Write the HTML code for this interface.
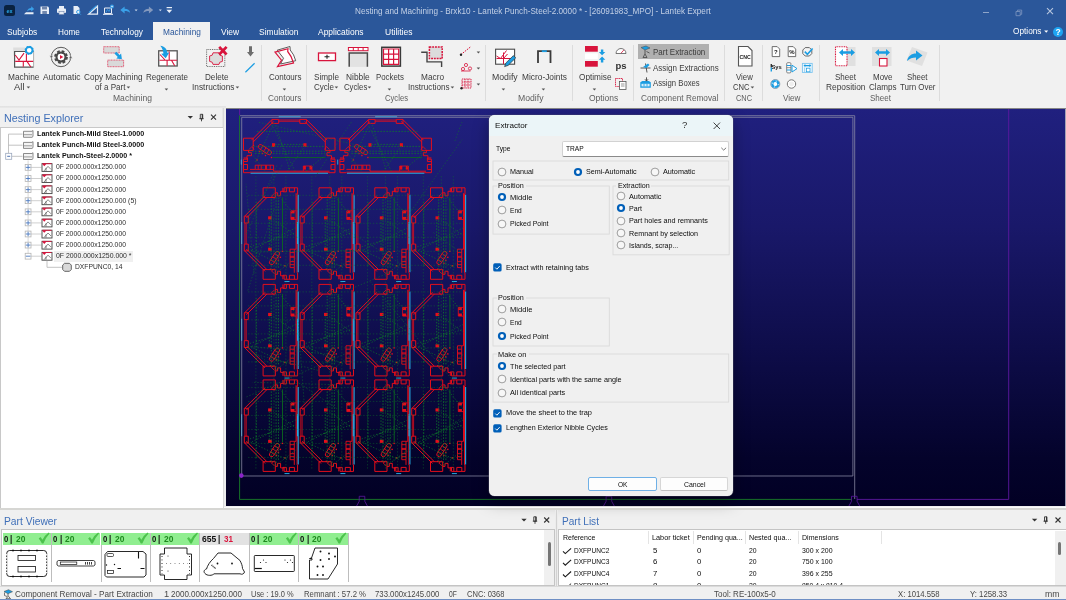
<!DOCTYPE html>
<html lang="en"><head><meta charset="utf-8"><title>Nesting and Machining - Lantek Expert</title>
<style>
html,body{margin:0;padding:0;}
body{width:1066px;height:600px;overflow:hidden;position:relative;background:#f0f0f0;font-family:"Liberation Sans",sans-serif;}
.t{position:absolute;white-space:nowrap;transform-origin:left center;display:block;}
.b{position:absolute;box-sizing:border-box;display:block;}
</style></head>
<body>
<div class="b" style="left:0.00px;top:0.00px;width:1066.00px;height:40.00px;background:#2b579a;"></div>
<svg class="b" style="left:4.00px;top:5.00px;transform:perspective(1000px) translateZ(0);" width="11" height="11" viewBox="0 0 11 11"><rect x="0" y="0" width="11" height="11" rx="2.5" fill="#0a2240"/><text x="5.5" y="7.6" font-size="5.5" font-weight="bold" text-anchor="middle" fill="#27a7e8" font-family="Liberation Sans, sans-serif">ex</text></svg>
<svg class="b" style="left:0.00px;top:0.00px;transform:perspective(1000px) translateZ(0);" width="180" height="22" viewBox="0 0 180 22"><path d="M24 14.2h9.5v-2h-7.5z" fill="#e8eef7"/><path d="M27 11.5c0.5-2.5 2.3-3.6 4.2-3.6v-1.6l3 2.6-3 2.6v-1.6c-1.6 0-3 .4-4.2 1.6z" fill="#3aa0e8"/><path d="M40.5 6.5h7.5l1 1v6.5h-8.5z" fill="#e8eef7"/><rect x="42" y="6.5" width="5" height="3" fill="#6f86ad"/><rect x="42.3" y="11" width="4.6" height="3" fill="#6f86ad"/><rect x="57" y="8.5" width="9" height="4.5" rx="1" fill="#e8eef7"/><rect x="59" y="6" width="5" height="3" fill="#e8eef7"/><rect x="59" y="11.5" width="5" height="3" fill="#e8eef7" stroke="#6f86ad" stroke-width=".6"/><path d="M73.5 6h4l2 2v6h-6z" fill="#e8eef7"/><circle cx="78.3" cy="12" r="1.7" fill="#e8eef7" stroke="#3aa0e8" stroke-width="1"/><path d="M79.5 13.3l1.3 1.3" stroke="#3aa0e8" stroke-width="1"/><path d="M88.5 14.2l9-8v8z" fill="none" stroke="#e8eef7" stroke-width="1.2"/><path d="M89 12.5l7.5-6.8" stroke="#3aa0e8" stroke-width="1.1"/><path d="M104.5 8h7v5.5h-7z" fill="none" stroke="#e8eef7" stroke-width="1"/><path d="M103 14.3h10" stroke="#e8eef7" stroke-width="1.1"/><path d="M106 12.5l1.5-3 1.5 2 1.5-3" stroke="#3aa0e8" stroke-width=".8" fill="none"/><circle cx="112" cy="6.5" r="1.9" fill="#3aa0e8"/><circle cx="112" cy="6.5" r=".8" fill="#e8eef7"/><path d="M120.3 10l4.3-3.4v2.2c3 0 5.2 1.3 5.6 4.3-1.4-1.6-3.2-2-5.6-2v2.3z" fill="#3aa0e8"/><path d="M134.6 9.6h3l-1.5 1.7z" fill="#c9d6ea"/><path d="M153.2 10l-4.3-3.4v2.2c-3 0-5.2 1.3-5.6 4.3 1.4-1.6 3.2-2 5.6-2v2.3z" fill="#8398bd"/><path d="M158.8 9.6h3l-1.5 1.7z" fill="#c9d6ea"/><path d="M166.6 7.6h5.4" stroke="#e8eef7" stroke-width="1.2"/><path d="M166.4 9.8h5.8l-2.9 3.2z" fill="#e8eef7"/></svg>
<span class="t" style="left:355.00px;top:4.76px;font-size:9.3px;line-height:12.09px;color:#c3d0e6;transform:perspective(1000px) translateZ(0) scaleX(0.8772);">Nesting and Machining - Brxk10 - Lantek Punch-Steel-2.0000 * - [26091983_MPO] - Lantek Expert</span>
<svg class="b" style="left:0.00px;top:0.00px;transform:perspective(1000px) translateZ(0);" width="1066" height="22" viewBox="0 0 1066 22"><path d="M983 12.5h6" stroke="#8fa5c9" stroke-width="1"/><path d="M1016 11.5h4.2v4.2h-4.2z M1017.5 11.5v-1.4h4.2v4.2h-1.5" fill="none" stroke="#7f97c0" stroke-width=".8"/><path d="M1047 8.2l6 6M1053 8.2l-6 6" stroke="#b7c6df" stroke-width="1.1"/></svg>
<div class="b" style="left:153.00px;top:22.00px;width:57.00px;height:18.50px;background:#f1f1f1;"></div>
<span class="t" style="left:6.70px;top:25.69px;font-size:9.4px;line-height:12.22px;color:#ffffff;transform:perspective(1000px) translateZ(0) scaleX(0.8919);">Subjobs</span>
<span class="t" style="left:58.00px;top:25.69px;font-size:9.4px;line-height:12.22px;color:#ffffff;transform:perspective(1000px) translateZ(0) scaleX(0.8774);">Home</span>
<span class="t" style="left:100.50px;top:25.69px;font-size:9.4px;line-height:12.22px;color:#ffffff;transform:perspective(1000px) translateZ(0) scaleX(0.8832);">Technology</span>
<span class="t" style="left:162.50px;top:25.69px;font-size:9.4px;line-height:12.22px;color:#2b579a;transform:perspective(1000px) translateZ(0) scaleX(0.8869);">Machining</span>
<span class="t" style="left:221.00px;top:25.69px;font-size:9.4px;line-height:12.22px;color:#ffffff;transform:perspective(1000px) translateZ(0) scaleX(0.9007);">View</span>
<span class="t" style="left:258.70px;top:25.69px;font-size:9.4px;line-height:12.22px;color:#ffffff;transform:perspective(1000px) translateZ(0) scaleX(0.9000);">Simulation</span>
<span class="t" style="left:318.30px;top:25.69px;font-size:9.4px;line-height:12.22px;color:#ffffff;transform:perspective(1000px) translateZ(0) scaleX(0.9016);">Applications</span>
<span class="t" style="left:384.50px;top:25.69px;font-size:9.4px;line-height:12.22px;color:#ffffff;transform:perspective(1000px) translateZ(0) scaleX(0.9078);">Utilities</span>
<span class="t" style="left:1013.00px;top:25.09px;font-size:9.4px;line-height:12.22px;color:#ffffff;transform:perspective(1000px) translateZ(0) scaleX(0.8798);">Options</span>
<svg class="b" style="left:1043.00px;top:29.00px;transform:perspective(1000px) translateZ(0);" width="8" height="6" viewBox="0 0 8 6"><path d="M1.2 1.6h4l-2 2.2z" fill="#fff"/></svg>
<svg class="b" style="left:1052.00px;top:25.50px;transform:perspective(1000px) translateZ(0);" width="12" height="12" viewBox="0 0 12 12"><circle cx="6" cy="6" r="5" fill="#1ea4f2"/><text x="6" y="9" font-size="8.5" font-weight="bold" text-anchor="middle" fill="#fff" font-family="Liberation Sans, sans-serif">?</text></svg>
<div class="b" style="left:0.00px;top:40.00px;width:1066.00px;height:66.50px;background:#f1f1f1;"></div>
<div class="b" style="left:0.00px;top:106.00px;width:226.00px;height:2.40px;background:linear-gradient(#e0e0e0,#e9e9e9);"></div>
<div class="b" style="left:226.00px;top:106.50px;width:840.00px;height:1.90px;background:#f1f1f1;"></div>
<span class="t" style="left:7.50px;top:71.16px;font-size:9.3px;line-height:12.09px;color:#3c3c3c;transform:perspective(1000px) translateZ(0) scaleX(0.8961);">Machine</span>
<span class="t" style="left:14.00px;top:80.86px;font-size:9.3px;line-height:12.09px;color:#3c3c3c;transform:perspective(1000px) translateZ(0) scaleX(1.0159);">All</span>
<svg class="b" style="left:25.50px;top:85.50px;transform:perspective(1000px) translateZ(0);" width="5" height="4" viewBox="0 0 5 4"><path d="M0.6 0.6h3.6l-1.8 2z" fill="#555"/></svg>
<span class="t" style="left:42.50px;top:71.16px;font-size:9.3px;line-height:12.09px;color:#3c3c3c;transform:perspective(1000px) translateZ(0) scaleX(0.9069);">Automatic</span>
<span class="t" style="left:84.00px;top:71.16px;font-size:9.3px;line-height:12.09px;color:#3c3c3c;transform:perspective(1000px) translateZ(0) scaleX(0.8772);">Copy Machining</span>
<span class="t" style="left:94.50px;top:80.86px;font-size:9.3px;line-height:12.09px;color:#3c3c3c;transform:perspective(1000px) translateZ(0) scaleX(0.8676);">of a Part</span>
<svg class="b" style="left:126.00px;top:85.50px;transform:perspective(1000px) translateZ(0);" width="5" height="4" viewBox="0 0 5 4"><path d="M0.6 0.6h3.6l-1.8 2z" fill="#555"/></svg>
<span class="t" style="left:146.00px;top:71.16px;font-size:9.3px;line-height:12.09px;color:#3c3c3c;transform:perspective(1000px) translateZ(0) scaleX(0.8641);">Regenerate</span>
<svg class="b" style="left:164.00px;top:88.00px;transform:perspective(1000px) translateZ(0);" width="5" height="4" viewBox="0 0 5 4"><path d="M0.6 0.6h3.6l-1.8 2z" fill="#555"/></svg>
<span class="t" style="left:204.50px;top:71.16px;font-size:9.3px;line-height:12.09px;color:#3c3c3c;transform:perspective(1000px) translateZ(0) scaleX(0.8741);">Delete</span>
<span class="t" style="left:192.00px;top:80.86px;font-size:9.3px;line-height:12.09px;color:#3c3c3c;transform:perspective(1000px) translateZ(0) scaleX(0.8937);">Instructions</span>
<svg class="b" style="left:234.50px;top:85.50px;transform:perspective(1000px) translateZ(0);" width="5" height="4" viewBox="0 0 5 4"><path d="M0.6 0.6h3.6l-1.8 2z" fill="#555"/></svg>
<span class="t" style="left:113.00px;top:91.86px;font-size:9.3px;line-height:12.09px;color:#5e5e5e;transform:perspective(1000px) translateZ(0) scaleX(0.9200);">Machining</span>
<div class="b" style="left:261.00px;top:45.00px;width:1.00px;height:56.00px;background:#dcdcdc;"></div>
<span class="t" style="left:269.00px;top:71.16px;font-size:9.3px;line-height:12.09px;color:#3c3c3c;transform:perspective(1000px) translateZ(0) scaleX(0.8612);">Contours</span>
<svg class="b" style="left:282.00px;top:88.00px;transform:perspective(1000px) translateZ(0);" width="5" height="4" viewBox="0 0 5 4"><path d="M0.6 0.6h3.6l-1.8 2z" fill="#555"/></svg>
<span class="t" style="left:268.30px;top:91.86px;font-size:9.3px;line-height:12.09px;color:#5e5e5e;transform:perspective(1000px) translateZ(0) scaleX(0.8877);">Contours</span>
<div class="b" style="left:306.00px;top:45.00px;width:1.00px;height:56.00px;background:#dcdcdc;"></div>
<span class="t" style="left:314.00px;top:71.16px;font-size:9.3px;line-height:12.09px;color:#3c3c3c;transform:perspective(1000px) translateZ(0) scaleX(0.8794);">Simple</span>
<span class="t" style="left:314.00px;top:80.86px;font-size:9.3px;line-height:12.09px;color:#3c3c3c;transform:perspective(1000px) translateZ(0) scaleX(0.8600);">Cycle</span>
<svg class="b" style="left:333.50px;top:85.50px;transform:perspective(1000px) translateZ(0);" width="5" height="4" viewBox="0 0 5 4"><path d="M0.6 0.6h3.6l-1.8 2z" fill="#555"/></svg>
<span class="t" style="left:346.00px;top:71.16px;font-size:9.3px;line-height:12.09px;color:#3c3c3c;transform:perspective(1000px) translateZ(0) scaleX(0.8989);">Nibble</span>
<span class="t" style="left:343.60px;top:80.86px;font-size:9.3px;line-height:12.09px;color:#3c3c3c;transform:perspective(1000px) translateZ(0) scaleX(0.8350);">Cycles</span>
<svg class="b" style="left:367.00px;top:85.50px;transform:perspective(1000px) translateZ(0);" width="5" height="4" viewBox="0 0 5 4"><path d="M0.6 0.6h3.6l-1.8 2z" fill="#555"/></svg>
<span class="t" style="left:376.30px;top:71.16px;font-size:9.3px;line-height:12.09px;color:#3c3c3c;transform:perspective(1000px) translateZ(0) scaleX(0.8464);">Pockets</span>
<svg class="b" style="left:387.20px;top:88.00px;transform:perspective(1000px) translateZ(0);" width="5" height="4" viewBox="0 0 5 4"><path d="M0.6 0.6h3.6l-1.8 2z" fill="#555"/></svg>
<span class="t" style="left:420.80px;top:71.16px;font-size:9.3px;line-height:12.09px;color:#3c3c3c;transform:perspective(1000px) translateZ(0) scaleX(0.8901);">Macro</span>
<span class="t" style="left:407.80px;top:80.86px;font-size:9.3px;line-height:12.09px;color:#3c3c3c;transform:perspective(1000px) translateZ(0) scaleX(0.8748);">Instructions</span>
<svg class="b" style="left:450.00px;top:85.50px;transform:perspective(1000px) translateZ(0);" width="5" height="4" viewBox="0 0 5 4"><path d="M0.6 0.6h3.6l-1.8 2z" fill="#555"/></svg>
<svg class="b" style="left:475.50px;top:50.50px;transform:perspective(1000px) translateZ(0);" width="5" height="4" viewBox="0 0 5 4"><path d="M0.6 0.6h3.6l-1.8 2z" fill="#555"/></svg>
<svg class="b" style="left:475.50px;top:66.50px;transform:perspective(1000px) translateZ(0);" width="5" height="4" viewBox="0 0 5 4"><path d="M0.6 0.6h3.6l-1.8 2z" fill="#555"/></svg>
<svg class="b" style="left:475.50px;top:82.50px;transform:perspective(1000px) translateZ(0);" width="5" height="4" viewBox="0 0 5 4"><path d="M0.6 0.6h3.6l-1.8 2z" fill="#555"/></svg>
<span class="t" style="left:385.30px;top:91.86px;font-size:9.3px;line-height:12.09px;color:#5e5e5e;transform:perspective(1000px) translateZ(0) scaleX(0.8242);">Cycles</span>
<div class="b" style="left:485.00px;top:45.00px;width:1.00px;height:56.00px;background:#dcdcdc;"></div>
<span class="t" style="left:492.00px;top:71.16px;font-size:9.3px;line-height:12.09px;color:#3c3c3c;transform:perspective(1000px) translateZ(0) scaleX(0.9382);">Modify</span>
<svg class="b" style="left:501.00px;top:88.00px;transform:perspective(1000px) translateZ(0);" width="5" height="4" viewBox="0 0 5 4"><path d="M0.6 0.6h3.6l-1.8 2z" fill="#555"/></svg>
<span class="t" style="left:521.50px;top:71.16px;font-size:9.3px;line-height:12.09px;color:#3c3c3c;transform:perspective(1000px) translateZ(0) scaleX(0.8977);">Micro-Joints</span>
<svg class="b" style="left:540.80px;top:88.00px;transform:perspective(1000px) translateZ(0);" width="5" height="4" viewBox="0 0 5 4"><path d="M0.6 0.6h3.6l-1.8 2z" fill="#555"/></svg>
<span class="t" style="left:518.00px;top:91.86px;font-size:9.3px;line-height:12.09px;color:#5e5e5e;transform:perspective(1000px) translateZ(0) scaleX(0.9309);">Modify</span>
<div class="b" style="left:571.50px;top:45.00px;width:1.00px;height:56.00px;background:#dcdcdc;"></div>
<span class="t" style="left:578.50px;top:71.16px;font-size:9.3px;line-height:12.09px;color:#3c3c3c;transform:perspective(1000px) translateZ(0) scaleX(0.8857);">Optimise</span>
<svg class="b" style="left:591.80px;top:88.00px;transform:perspective(1000px) translateZ(0);" width="5" height="4" viewBox="0 0 5 4"><path d="M0.6 0.6h3.6l-1.8 2z" fill="#555"/></svg>
<span class="t" style="left:588.50px;top:91.86px;font-size:9.3px;line-height:12.09px;color:#5e5e5e;transform:perspective(1000px) translateZ(0) scaleX(0.9142);">Options</span>
<div class="b" style="left:633.00px;top:45.00px;width:1.00px;height:56.00px;background:#dcdcdc;"></div>
<div class="b" style="left:638.00px;top:44.00px;width:71.00px;height:15.00px;background:#b0b0b0;"></div>
<span class="t" style="left:653.00px;top:45.85px;font-size:9.3px;line-height:12.09px;color:#3c3c3c;transform:perspective(1000px) translateZ(0) scaleX(0.8575);">Part Extraction</span>
<span class="t" style="left:653.00px;top:61.55px;font-size:9.3px;line-height:12.09px;color:#3c3c3c;transform:perspective(1000px) translateZ(0) scaleX(0.8588);">Assign Extractions</span>
<span class="t" style="left:653.00px;top:77.16px;font-size:9.3px;line-height:12.09px;color:#3c3c3c;transform:perspective(1000px) translateZ(0) scaleX(0.8288);">Assign Boxes</span>
<span class="t" style="left:641.00px;top:91.86px;font-size:9.3px;line-height:12.09px;color:#5e5e5e;transform:perspective(1000px) translateZ(0) scaleX(0.8871);">Component Removal</span>
<div class="b" style="left:724.00px;top:45.00px;width:1.00px;height:56.00px;background:#dcdcdc;"></div>
<span class="t" style="left:736.00px;top:71.16px;font-size:9.3px;line-height:12.09px;color:#3c3c3c;transform:perspective(1000px) translateZ(0) scaleX(0.8404);">View</span>
<span class="t" style="left:733.00px;top:80.86px;font-size:9.3px;line-height:12.09px;color:#3c3c3c;transform:perspective(1000px) translateZ(0) scaleX(0.8189);">CNC</span>
<svg class="b" style="left:750.00px;top:85.50px;transform:perspective(1000px) translateZ(0);" width="5" height="4" viewBox="0 0 5 4"><path d="M0.6 0.6h3.6l-1.8 2z" fill="#555"/></svg>
<span class="t" style="left:736.00px;top:91.86px;font-size:9.3px;line-height:12.09px;color:#5e5e5e;transform:perspective(1000px) translateZ(0) scaleX(0.7941);">CNC</span>
<div class="b" style="left:761.50px;top:45.00px;width:1.00px;height:56.00px;background:#dcdcdc;"></div>
<span class="t" style="left:783.00px;top:91.86px;font-size:9.3px;line-height:12.09px;color:#5e5e5e;transform:perspective(1000px) translateZ(0) scaleX(0.8754);">View</span>
<div class="b" style="left:819.00px;top:45.00px;width:1.00px;height:56.00px;background:#dcdcdc;"></div>
<span class="t" style="left:835.00px;top:71.16px;font-size:9.3px;line-height:12.09px;color:#3c3c3c;transform:perspective(1000px) translateZ(0) scaleX(0.8640);">Sheet</span>
<span class="t" style="left:826.00px;top:80.86px;font-size:9.3px;line-height:12.09px;color:#3c3c3c;transform:perspective(1000px) translateZ(0) scaleX(0.8989);">Reposition</span>
<span class="t" style="left:872.50px;top:71.16px;font-size:9.3px;line-height:12.09px;color:#3c3c3c;transform:perspective(1000px) translateZ(0) scaleX(0.8574);">Move</span>
<span class="t" style="left:869.00px;top:80.86px;font-size:9.3px;line-height:12.09px;color:#3c3c3c;transform:perspective(1000px) translateZ(0) scaleX(0.8723);">Clamps</span>
<span class="t" style="left:907.00px;top:71.16px;font-size:9.3px;line-height:12.09px;color:#3c3c3c;transform:perspective(1000px) translateZ(0) scaleX(0.8435);">Sheet</span>
<span class="t" style="left:900.00px;top:80.86px;font-size:9.3px;line-height:12.09px;color:#3c3c3c;transform:perspective(1000px) translateZ(0) scaleX(0.8551);">Turn Over</span>
<span class="t" style="left:870.00px;top:91.86px;font-size:9.3px;line-height:12.09px;color:#5e5e5e;transform:perspective(1000px) translateZ(0) scaleX(0.8640);">Sheet</span>
<div class="b" style="left:939.00px;top:45.00px;width:1.00px;height:56.00px;background:#dcdcdc;"></div>
<svg class="b" style="left:0.00px;top:0.00px;transform:perspective(1000px) translateZ(0);" width="1066" height="108" viewBox="0 0 1066 108"><rect x="13.2" y="47.5" width="12" height="8" fill="#dedede"/><rect x="14.6" y="51.5" width="19" height="15.6" fill="#fff"/><path d="M33.6 51.5H14.6V67.1H33.6" fill="none" stroke="#555555" stroke-width="1.2"/><path d="M33.6 51.5V67.1" stroke="#9a9a9a" stroke-width=".8"/><path d="M15.2 55l3.8 5 5-6.8M15.2 61.4h18M23.3 61.4v5.400M27 61.4l3.8 5.600M26.4 53.500v7.9" stroke="#d8143c" stroke-width="1.1" fill="none"/><circle cx="29.2" cy="50.3" r="3.3" fill="#fff" stroke="#1b9de2" stroke-width="1.9"/><circle cx="29.2" cy="50.3" r="3.9" fill="none" stroke="#1b9de2" stroke-width="1.3" stroke-dasharray="1.5 1.560"/><circle cx="61" cy="57" r="9.7" fill="none" stroke="#4a4a4a" stroke-width=".9"/><circle cx="61" cy="57" r="5.9" fill="none" stroke="#484848" stroke-width="2" stroke-dasharray="2.7 1.930"/><circle cx="61" cy="57" r="4.4" fill="none" stroke="#484848" stroke-width="2.3"/><circle cx="61" cy="57" r="3.3" fill="#fff"/><path d="M60 55l3.3 2 -3.3 2z" fill="#d8143c"/><path d="M49.6 55.800l1.8 2.6 1.8 -2.600zM72.4 58.200l-1.8 -2.6 -1.8 2.600z" fill="#4a4a4a" stroke="#f1f1f1" stroke-width=".5"/><rect x="103.7" y="46.7" width="15.5" height="6.3" fill="#d9d9d9" stroke="#e0506c" stroke-width=".9" stroke-dasharray="1.1 .5"/><rect x="107.7" y="60.1" width="15.9" height="6.6" fill="#d9d9d9" stroke="#e0506c" stroke-width=".9" stroke-dasharray="1.1 .5"/><path d="M116.3 51.700l3.3 3.4 1.5 -1.5 .8 5.6 -5.6 -.8 1.5 -1.5 -3.4 -3.300z" fill="#1b9de2"/><rect x="158.7" y="50.8" width="18.5" height="15.2" fill="#fff" stroke="#555555" stroke-width="1.3"/><path d="M159.5 60.200h17.500M167.1 60.200v5.600M171.5 60.200l3.2 5.600M169.2 51.500v8.700M160 54.500l5 5.5" stroke="#d8143c" stroke-width="1.1" fill="none"/><path d="M160.3 45.800c4.2 .6 6.8 3.2 7 7l2 -.4 -3.6 5.8 -4.6 -4.5 2.3 -.3c-.1 -2.6 -1.2 -5.2 -3.1 -7.600z" fill="#1b9de2"/><rect x="206.6" y="49.5" width="18.2" height="17" fill="none" stroke="#555" stroke-width=".9" stroke-dasharray=".9 .9"/><path d="M213 52.800h6l.8 2.4 2.6 .8v5.400l-2.6 .8 -.8 2.200h-6l-.8 -2.2 -2.6 -.8v-5.400l2.6 -.8z" fill="#dcdcdc" stroke="#d8143c" stroke-width=".9"/><path d="M219.2 46.900l7.4 7.600M226.6 46.900l-7.4 7.6" stroke="#d8143c" stroke-width="2.7"/><path d="M249 46.300h3v5.800h2l-3.5 4.5 -3.5 -4.500h2z" fill="#6e6e6e"/><path d="M245.4 72.300l9.2 -9" stroke="#1b9de2" stroke-width="1.2"/><path d="M277.2 50.200l12.8 -3.7 .2 3.500q4 4.5 5.5 10.700l-15.2 3.3 3 -5.800z" fill="#fff" stroke="#4a4a4a" stroke-width=".9"/><path d="M275 52.200l13 -3.5 -.3 2.800q4.3 5 5.8 11.500l-16 3.7 4 -6.500z" fill="none" stroke="#d8143c" stroke-width="1.2"/><rect x="318.5" y="53" width="17" height="7.6" fill="#fff" stroke="#d8143c" stroke-width="1.3"/><path d="M324.5 56.800h5M327 54.800v4" stroke="#222" stroke-width="1.1"/><rect x="349.2" y="52.9" width="18.2" height="14" fill="#e2e2e2"/><path d="M349.2 66.800V52.900H367.400V66.8" fill="none" stroke="#4a4a4a" stroke-width="1.5"/><rect x="348.4" y="47.5" width="19.6" height="3.2" fill="#fff" stroke="#d8143c" stroke-width="1"/><path d="M353.3 47.500v3.200M358.2 47.500v3.200M363.1 47.500v3.2" stroke="#d8143c" stroke-width="1"/><rect x="381.8" y="47.3" width="18.6" height="18.8" fill="#fff" stroke="#3a3a3a" stroke-width="1.5"/><path d="M383.5 49h15.200v15.400h-15.200zM388.6 49v15.400M393.6 49v15.400M383.5 54.100h15.200M383.5 59.300h15.2" stroke="#d8143c" stroke-width="1.2" fill="none"/><rect x="429.4" y="47" width="12.8" height="11.6" fill="#dcdcdc" stroke="#d8143c" stroke-width="1.5" stroke-dasharray="1.9 .9"/><path d="M421.2 52.300h5.800v9.600h14.600v5" fill="none" stroke="#444" stroke-width="1.4"/><path d="M461 54.500l10-8" stroke="#d8143c" stroke-width="1" stroke-dasharray="1.5 1"/><circle cx="461" cy="54.8" r="1.2" fill="#222"/><circle cx="463" cy="69" r="1.6" fill="none" stroke="#d8143c" stroke-width=".8"/><circle cx="466" cy="65" r="1.6" fill="none" stroke="#d8143c" stroke-width=".8"/><circle cx="470" cy="68.5" r="1.6" fill="none" stroke="#d8143c" stroke-width=".8"/><path d="M461 71h9.5" stroke="#d8143c" stroke-width=".8"/><path d="M462 79h9v9h-9zM465 79v9M468 79v9M462 82h9M462 85h9" stroke="#d8143c" stroke-width=".9" fill="none" stroke-dasharray="1.2 .6"/><circle cx="461.5" cy="88.2" r="1.2" fill="#222"/><rect x="495.6" y="49.2" width="19" height="15" fill="#fff" stroke="#4a4a4a" stroke-width="1.1"/><path d="M496.5 56l4 2.5 6 -8M496.5 58.500h18M503.5 52.500v11.500M503.5 58.500l4 -4.5" stroke="#d8143c" stroke-width="1" fill="none"/><path d="M504.6 66.600l1.2 -3.6 7.6 -7.4 2.3 2.3 -7.6 7.500z" fill="#1b9de2" stroke="#333" stroke-width=".7"/><path d="M538 63v-11.800h12.500v11.8" fill="none" stroke="#3a3a3a" stroke-width="1.8"/><path d="M541.8 51.200h5" stroke="#1b9de2" stroke-width="1.8"/><rect x="585" y="46" width="12.8" height="5.7" fill="#d8143c"/><rect x="585" y="53.4" width="12.8" height="5.8" fill="#fff"/><rect x="585" y="61" width="12.8" height="5.7" fill="#d8143c"/><path d="M602.1 55.2l-3.2 -3.3h2v-2.4h2.4v2.4h2zM602.1 56.4l3.2 3.3h-2v2.8h-2.4v-2.8h-2z" fill="#1b9de2"/><path d="M616 53.500a5 5 0 0 1 10 0z" fill="#fff" stroke="#555555" stroke-width=".8"/><path d="M621 53.200l3-3.4" stroke="#d8143c" stroke-width=".8"/><text x="621" y="69.3" font-size="9.5" font-weight="bold" text-anchor="middle" fill="#333" font-family="Liberation Sans, sans-serif">ps</text><rect x="615.5" y="78.5" width="7" height="8" fill="none" stroke="#d8143c" stroke-width=".9" stroke-dasharray="1.2 .6"/><rect x="619.5" y="81.5" width="6.5" height="8" fill="#fff" stroke="#555555" stroke-width=".8"/><path d="M621 84h3.500M621 86h3.5" stroke="#555555" stroke-width=".6"/><path d="M641 47.500l5-1.5 4 2-5 2z" fill="#1b9de2" stroke="#444" stroke-width=".5"/><path d="M645 50v4l-2 3.500h4l-2-3.5" fill="none" stroke="#444" stroke-width=".8"/><path d="M646.5 51.500l3 1.5" stroke="#444" stroke-width=".8"/><path d="M640.5 68h10M645.5 63.500l1.5 9" stroke="#444" stroke-width=".9"/><path d="M643 67l5-3.5 1.5 1.5-3 3z" fill="#1b9de2"/><path d="M640.3 82.3l2 -1.3h6.5l2 1.3v5.4h-10.5z" fill="#1b9de2"/><path d="M641.5 83.800h8.100v2.600h-8.100z" fill="#d9effb"/><path d="M644 83.800v2.600M647 83.800v2.6" stroke="#1b9de2" stroke-width=".8"/><path d="M646.5 77.300v3.600M645 79.300l1.5 1.8 1.5 -1.8" stroke="#444" stroke-width=".9" fill="none"/><path d="M738.5 46.500h9.500l4 4v15.500h-13.500z" fill="#fff" stroke="#555555" stroke-width="1.1"/><text x="745.2" y="59" font-size="5.2" font-weight="bold" text-anchor="middle" fill="#222" font-family="Liberation Sans, sans-serif">CNC</text><path d="M772.2 46.6h5l2.5 2.500v7.500h-7.500z" fill="#fff" stroke="#4a4a4a" stroke-width=".8"/><text x="775.9000000000001" y="54.2" font-size="6" font-weight="bold" text-anchor="middle" fill="#111" font-family="Liberation Sans, sans-serif">?</text><path d="M788.2 46.6h5l2.5 2.500v7.500h-7.500z" fill="#fff" stroke="#4a4a4a" stroke-width=".8"/><text x="791.9000000000001" y="54.2" font-size="6" font-weight="bold" text-anchor="middle" fill="#111" font-family="Liberation Sans, sans-serif">%</text><path d="M805.2 47.600h4.200l2.4 2.400v3.600l-2.4 2.400h-4.200l-2.4 -2.400v-3.600z" fill="#f4f4f4" stroke="#666" stroke-width="1"/><path d="M804.8 51.600l2.6 2.7 5.2 -5.8" stroke="#1b9de2" stroke-width="1.6" fill="none"/><text x="776.6" y="69.4" font-size="5.8" font-weight="bold" text-anchor="middle" fill="#222" font-family="Liberation Sans, sans-serif">Sys</text><path d="M771.3 64v3.5" stroke="#333" stroke-width="1.4"/><path d="M771.3 67.500v4" stroke="#1b9de2" stroke-width="1.4"/><rect x="786.7" y="62.7" width="4.2" height="10.2" rx="1" fill="#fff" stroke="#666" stroke-width=".8"/><path d="M786.7 65.500h4.200M786.7 70h4.2" stroke="#1b9de2" stroke-width="1.2"/><path d="M786.7 67.700h4.2" stroke="#666" stroke-width=".7"/><path d="M792 65.200l5 3.4 -5 3.400z" fill="#fff" stroke="#1b9de2" stroke-width="1"/><rect x="802.4" y="63.4" width="9.8" height="9" fill="#eef7fd" stroke="#7cc4ee" stroke-width=".9"/><path d="M803.5 65.600l1.8 -1.600v1h4.200v-1l1.8 1.6 -1.8 1.600v-1h-4.200v1z" fill="#1b9de2"/><rect x="806.6" y="68.2" width="3.4" height="3.6" fill="#fff" stroke="#1b9de2" stroke-width=".7"/><path d="M804.6 67.500v5" stroke="#7cc4ee" stroke-width=".7"/><circle cx="775.3" cy="84" r="4.5" fill="#fff" stroke="#3a5f80" stroke-width=".6"/><circle cx="775.3" cy="84" r="3" fill="none" stroke="#1b9de2" stroke-width="2.2"/><circle cx="775.3" cy="84" r="3" fill="none" stroke="#fff" stroke-width=".9" stroke-dasharray="1.2 3.5"/><circle cx="775.3" cy="84" r="1.5" fill="#fff"/><circle cx="791.5" cy="84" r="4.2" fill="#fff" stroke="#6a6a6a" stroke-width=".9"/><circle cx="791.5" cy="84" r="2.4" fill="#efefef"/><rect x="840" y="47" width="15.5" height="19" fill="#e0e0e0"/><rect x="835.5" y="46.8" width="11.5" height="19" fill="#fff" stroke="#d8143c" stroke-width="1.1" stroke-dasharray="1 .7"/><path d="M839 52.500l4-3.500v2.300h8v-2.300l4 3.5-4 3.500v-2.300h-8v2.300z" fill="#1b9de2"/><rect x="872" y="47" width="19.5" height="19" fill="#e0e0e0"/><path d="M875 52.500l4-3.500v2.300h7v-2.300l4 3.5-4 3.500v-2.300h-7v2.300z" fill="#1b9de2"/><rect x="879.5" y="58.5" width="7.5" height="7.5" fill="#fff" stroke="#d8143c" stroke-width="1.1"/><path d="M912 47l15.5 5.5-5.5 13.5-15.5-5.500z" fill="#e0e0e0"/><path d="M907 61c1-5 4.5-7.5 9-7.500v-3l6.5 5-6.5 5v-3c-3.5 0-6.5 1-9 3.500z" fill="#1b9de2"/></svg>
<div class="b" style="left:0.00px;top:108.40px;width:222.00px;height:399.00px;background:#f0f0f0;"></div>
<div class="b" style="left:222.00px;top:108.00px;width:1.00px;height:400.00px;background:#e6e6e6;"></div>
<div class="b" style="left:223.00px;top:108.00px;width:1.00px;height:400.00px;background:#d8d8d8;"></div>
<div class="b" style="left:224.00px;top:108.00px;width:2.00px;height:400.00px;background:#ececec;"></div>
<span class="t" style="left:3.80px;top:109.89px;font-size:11.7px;line-height:15.21px;color:#3f6fb8;transform:perspective(1000px) translateZ(0) scaleX(0.9192);">Nesting Explorer</span>
<svg class="b" style="left:0.00px;top:0.00px;transform:perspective(1000px) translateZ(0);" width="222" height="126" viewBox="0 0 222 126"><path d="M187.6 116h5.400l-2.7 2.800z" fill="#333"/><path d="M200.3 114.300h2.400v4.400h-2.400zM199.3 118.700h4.400M201.5 118.700v2.6" stroke="#333" stroke-width=".9" fill="none"/><path d="M202.3 114.300v4.4" stroke="#333" stroke-width="1.1"/><path d="M211 114.700l5 5M216 114.700l-5 5" stroke="#333" stroke-width="1.1"/></svg>
<div class="b" style="left:0.00px;top:127.00px;width:222.50px;height:381.00px;background:#fff;border-top:1px solid #c8c8c8;"></div>
<span class="t" style="left:36.50px;top:129.03px;font-size:7.8px;line-height:10.14px;color:#111;font-weight:bold;transform:perspective(1000px) translateZ(0) scaleX(0.9202);">Lantek Punch-Mild Steel-1.0000</span>
<span class="t" style="left:36.50px;top:140.13px;font-size:7.8px;line-height:10.14px;color:#111;font-weight:bold;transform:perspective(1000px) translateZ(0) scaleX(0.9202);">Lantek Punch-Mild Steel-3.0000</span>
<span class="t" style="left:36.50px;top:151.23px;font-size:7.8px;line-height:10.14px;color:#111;font-weight:bold;transform:perspective(1000px) translateZ(0) scaleX(0.9131);">Lantek Punch-Steel-2.0000 *</span>
<div class="b" style="left:54.00px;top:250.80px;width:79.00px;height:10.80px;background:#f0f0f0;"></div>
<span class="t" style="left:55.80px;top:162.33px;font-size:7.8px;line-height:10.14px;color:#2e2e2e;transform:perspective(1000px) translateZ(0) scaleX(0.8724);">0F 2000.000x1250.000</span>
<span class="t" style="left:55.80px;top:173.43px;font-size:7.8px;line-height:10.14px;color:#2e2e2e;transform:perspective(1000px) translateZ(0) scaleX(0.8724);">0F 2000.000x1250.000</span>
<span class="t" style="left:55.80px;top:184.53px;font-size:7.8px;line-height:10.14px;color:#2e2e2e;transform:perspective(1000px) translateZ(0) scaleX(0.8724);">0F 2000.000x1250.000</span>
<span class="t" style="left:55.80px;top:195.63px;font-size:7.8px;line-height:10.14px;color:#2e2e2e;transform:perspective(1000px) translateZ(0) scaleX(0.8756);">0F 2000.000x1250.000 (5)</span>
<span class="t" style="left:55.80px;top:206.73px;font-size:7.8px;line-height:10.14px;color:#2e2e2e;transform:perspective(1000px) translateZ(0) scaleX(0.8724);">0F 2000.000x1250.000</span>
<span class="t" style="left:55.80px;top:217.83px;font-size:7.8px;line-height:10.14px;color:#2e2e2e;transform:perspective(1000px) translateZ(0) scaleX(0.8724);">0F 2000.000x1250.000</span>
<span class="t" style="left:55.80px;top:228.93px;font-size:7.8px;line-height:10.14px;color:#2e2e2e;transform:perspective(1000px) translateZ(0) scaleX(0.8724);">0F 2000.000x1250.000</span>
<span class="t" style="left:55.80px;top:240.03px;font-size:7.8px;line-height:10.14px;color:#2e2e2e;transform:perspective(1000px) translateZ(0) scaleX(0.8724);">0F 2000.000x1250.000</span>
<span class="t" style="left:55.80px;top:251.13px;font-size:7.8px;line-height:10.14px;color:#2e2e2e;transform:perspective(1000px) translateZ(0) scaleX(0.8837);">0F 2000.000x1250.000 *</span>
<span class="t" style="left:74.50px;top:262.23px;font-size:7.8px;line-height:10.14px;color:#2e2e2e;transform:perspective(1000px) translateZ(0) scaleX(0.8628);">DXFPUNC0, 14</span>
<svg class="b" style="left:0.00px;top:0.00px;transform:perspective(1000px) translateZ(0);" width="222" height="300" viewBox="0 0 222 300"><path d="M8.5 134.1H22.500M8.5 145.2H22.500M8.5 134.1V153.29999999999998M12 156.29999999999998H22.5" stroke="#b4b4b4" stroke-width=".8" fill="none"/><path d="M28.1 160.29999999999998V256.2" stroke="#d0d0d0" stroke-width=".8"/><path d="M23.5 131.29999999999998h8.500l1 -.8v6l-1 .8h-8.500z" fill="#f4f4f4" stroke="#707070" stroke-width=".8"/><path d="M23.5 134.7h8.5" stroke="#777" stroke-width=".7"/><path d="M23.5 142.39999999999998h8.500l1 -.8v6l-1 .8h-8.500z" fill="#f4f4f4" stroke="#707070" stroke-width=".8"/><path d="M23.5 145.79999999999998h8.5" stroke="#777" stroke-width=".7"/><path d="M23.5 153.49999999999997h8.500l1 -.8v6l-1 .8h-8.500z" fill="#f4f4f4" stroke="#707070" stroke-width=".8"/><path d="M23.5 156.89999999999998h8.5" stroke="#777" stroke-width=".7"/><rect x="5.7" y="153.29999999999998" width="6" height="6" fill="#fff" stroke="#9aa7bd" stroke-width=".8"/><path d="M7.2 156.29999999999998h3" stroke="#3a62a8" stroke-width=".9"/><path d="M31 167.39999999999998H41.5" stroke="#c4c4c4" stroke-width=".8"/><rect x="25.2" y="164.49999999999997" width="5.8" height="5.8" fill="#fff" stroke="#b4b4b4" stroke-width=".8"/><path d="M25.8 167.39999999999998h4.6" stroke="#4a78c0" stroke-width=".9"/><path d="M28.1 165.09999999999997v4.6" stroke="#4a78c0" stroke-width=".9"/><rect x="42" y="163.59999999999997" width="10" height="7.8" fill="#fff" stroke="#444" stroke-width=".9"/><path d="M42 163.79999999999998h4.500l-2.2 2.400z" fill="#d8143c"/><path d="M44 170.89999999999998l4-4.5 3 3M46 167.89999999999998v3" stroke="#555" stroke-width=".7" fill="none"/><path d="M42.5 163.7h9" stroke="#d8143c" stroke-width=".9"/><path d="M31 178.5H41.5" stroke="#c4c4c4" stroke-width=".8"/><rect x="25.2" y="175.6" width="5.8" height="5.8" fill="#fff" stroke="#b4b4b4" stroke-width=".8"/><path d="M25.8 178.5h4.6" stroke="#4a78c0" stroke-width=".9"/><path d="M28.1 176.2v4.6" stroke="#4a78c0" stroke-width=".9"/><rect x="42" y="174.7" width="10" height="7.8" fill="#fff" stroke="#444" stroke-width=".9"/><path d="M42 174.9h4.500l-2.2 2.400z" fill="#d8143c"/><path d="M44 182.0l4-4.5 3 3M46 179.0v3" stroke="#555" stroke-width=".7" fill="none"/><path d="M42.5 174.8h9" stroke="#d8143c" stroke-width=".9"/><path d="M31 189.6H41.5" stroke="#c4c4c4" stroke-width=".8"/><rect x="25.2" y="186.7" width="5.8" height="5.8" fill="#fff" stroke="#b4b4b4" stroke-width=".8"/><path d="M25.8 189.6h4.6" stroke="#4a78c0" stroke-width=".9"/><path d="M28.1 187.29999999999998v4.6" stroke="#4a78c0" stroke-width=".9"/><rect x="42" y="185.79999999999998" width="10" height="7.8" fill="#fff" stroke="#444" stroke-width=".9"/><path d="M42 186.0h4.500l-2.2 2.400z" fill="#d8143c"/><path d="M44 193.1l4-4.5 3 3M46 190.1v3" stroke="#555" stroke-width=".7" fill="none"/><path d="M42.5 185.9h9" stroke="#d8143c" stroke-width=".9"/><path d="M31 200.7H41.5" stroke="#c4c4c4" stroke-width=".8"/><rect x="25.2" y="197.79999999999998" width="5.8" height="5.8" fill="#fff" stroke="#b4b4b4" stroke-width=".8"/><path d="M25.8 200.7h4.6" stroke="#4a78c0" stroke-width=".9"/><path d="M28.1 198.39999999999998v4.6" stroke="#4a78c0" stroke-width=".9"/><rect x="42" y="196.89999999999998" width="10" height="7.8" fill="#fff" stroke="#444" stroke-width=".9"/><path d="M42 197.1h4.500l-2.2 2.400z" fill="#d8143c"/><path d="M44 204.2l4-4.5 3 3M46 201.2v3" stroke="#555" stroke-width=".7" fill="none"/><path d="M42.5 197.0h9" stroke="#d8143c" stroke-width=".9"/><path d="M31 211.8H41.5" stroke="#c4c4c4" stroke-width=".8"/><rect x="25.2" y="208.9" width="5.8" height="5.8" fill="#fff" stroke="#b4b4b4" stroke-width=".8"/><path d="M25.8 211.8h4.6" stroke="#4a78c0" stroke-width=".9"/><path d="M28.1 209.5v4.6" stroke="#4a78c0" stroke-width=".9"/><rect x="42" y="208.0" width="10" height="7.8" fill="#fff" stroke="#444" stroke-width=".9"/><path d="M42 208.20000000000002h4.500l-2.2 2.400z" fill="#d8143c"/><path d="M44 215.3l4-4.5 3 3M46 212.3v3" stroke="#555" stroke-width=".7" fill="none"/><path d="M42.5 208.10000000000002h9" stroke="#d8143c" stroke-width=".9"/><path d="M31 222.89999999999998H41.5" stroke="#c4c4c4" stroke-width=".8"/><rect x="25.2" y="219.99999999999997" width="5.8" height="5.8" fill="#fff" stroke="#b4b4b4" stroke-width=".8"/><path d="M25.8 222.89999999999998h4.6" stroke="#4a78c0" stroke-width=".9"/><path d="M28.1 220.59999999999997v4.6" stroke="#4a78c0" stroke-width=".9"/><rect x="42" y="219.09999999999997" width="10" height="7.8" fill="#fff" stroke="#444" stroke-width=".9"/><path d="M42 219.29999999999998h4.500l-2.2 2.400z" fill="#d8143c"/><path d="M44 226.39999999999998l4-4.5 3 3M46 223.39999999999998v3" stroke="#555" stroke-width=".7" fill="none"/><path d="M42.5 219.2h9" stroke="#d8143c" stroke-width=".9"/><path d="M31 234.0H41.5" stroke="#c4c4c4" stroke-width=".8"/><rect x="25.2" y="231.1" width="5.8" height="5.8" fill="#fff" stroke="#b4b4b4" stroke-width=".8"/><path d="M25.8 234.0h4.6" stroke="#4a78c0" stroke-width=".9"/><path d="M28.1 231.7v4.6" stroke="#4a78c0" stroke-width=".9"/><rect x="42" y="230.2" width="10" height="7.8" fill="#fff" stroke="#444" stroke-width=".9"/><path d="M42 230.4h4.500l-2.2 2.400z" fill="#d8143c"/><path d="M44 237.5l4-4.5 3 3M46 234.5v3" stroke="#555" stroke-width=".7" fill="none"/><path d="M42.5 230.3h9" stroke="#d8143c" stroke-width=".9"/><path d="M31 245.1H41.5" stroke="#c4c4c4" stroke-width=".8"/><rect x="25.2" y="242.2" width="5.8" height="5.8" fill="#fff" stroke="#b4b4b4" stroke-width=".8"/><path d="M25.8 245.1h4.6" stroke="#4a78c0" stroke-width=".9"/><path d="M28.1 242.79999999999998v4.6" stroke="#4a78c0" stroke-width=".9"/><rect x="42" y="241.29999999999998" width="10" height="7.8" fill="#fff" stroke="#444" stroke-width=".9"/><path d="M42 241.5h4.500l-2.2 2.400z" fill="#d8143c"/><path d="M44 248.6l4-4.5 3 3M46 245.6v3" stroke="#555" stroke-width=".7" fill="none"/><path d="M42.5 241.4h9" stroke="#d8143c" stroke-width=".9"/><path d="M31 256.2H41.5" stroke="#c4c4c4" stroke-width=".8"/><rect x="25.2" y="253.29999999999998" width="5.8" height="5.8" fill="#fff" stroke="#b4b4b4" stroke-width=".8"/><path d="M25.8 256.2h4.6" stroke="#4a78c0" stroke-width=".9"/><rect x="42" y="252.39999999999998" width="10" height="7.8" fill="#fff" stroke="#444" stroke-width=".9"/><path d="M42 252.6h4.500l-2.2 2.400z" fill="#d8143c"/><path d="M44 259.7l4-4.5 3 3M46 256.7v3" stroke="#555" stroke-width=".7" fill="none"/><path d="M42.5 252.5h9" stroke="#d8143c" stroke-width=".9"/><path d="M47 260.7V267.29999999999995H62" stroke="#b4b4b4" stroke-width=".8" fill="none"/><path d="M64.5 263.29999999999995h5l1.8 1.800v4.400l-1.8 1.800h-5l-1.8 -1.800v-4.400z" fill="#d9d9d9" stroke="#555" stroke-width=".9"/></svg>
<div class="b" style="left:0.00px;top:127.00px;width:1.00px;height:380.50px;background:#c8c8c8;"></div>
<div class="b" style="left:225.60px;top:108.40px;width:839.20px;height:398.00px;background:linear-gradient(180deg,#20207f 0%,#191869 30%,#0e0d4a 60%,#04032b 88%,#020024 100%);"></div>
<svg class="b" style="left:226px;top:108px;overflow:hidden;transform:perspective(1000px) translateZ(0);" width="838.8" height="398.4" viewBox="226 108 838.8 398.4"><g transform="translate(243.0 119.0)"><path d="M0.5 19.2h9.7v12.2h-9.7z" fill="none" stroke="#e60e1a" stroke-width="1"/><path d="M0.5 19.2h9.7v12.2h-9.7z" fill="none" stroke="#e60e1a" stroke-width="1" transform="translate(92.5 0) scale(-1 1)"/><path d="M8.4 21.2l20.5 -20.5M10.2 23l20.6 -20.6" fill="none" stroke="#e60e1a" stroke-width="1"/><path d="M8.4 21.2l20.5 -20.5M10.2 23l20.6 -20.6" fill="none" stroke="#e60e1a" stroke-width="1" transform="translate(92.5 0) scale(-1 1)"/><path d="M28.9 0.4h6.8v4h-6.8z" fill="none" stroke="#e60e1a" stroke-width="1"/><path d="M28.9 0.4h6.8v4h-6.8z" fill="none" stroke="#e60e1a" stroke-width="1" transform="translate(92.5 0) scale(-1 1)"/><path d="M5.5 31.4v2.300h3v3h-4.500v3.500h-3.500v13.500h6.500M0.5 39h4v3.500h-4M0.5 45.500h4v5h-4" fill="none" stroke="#e60e1a" stroke-width="1"/><path d="M5.5 31.4v2.300h3v3h-4.500v3.500h-3.500v13.500h6.500M0.5 39h4v3.500h-4M0.5 45.500h4v5h-4" fill="none" stroke="#e60e1a" stroke-width="1" transform="translate(92.5 0) scale(-1 1)"/><path d="M35.7 1h21.100M35.7 2.300h21.1" stroke="#e60e1a" stroke-width=".8" fill="none"/><path d="M7 50.400h5.200M30.6 50.400v1.800h56M7 53.200h79" stroke="#e60e1a" stroke-width=".95" fill="none"/><path d="M12.2 50.4v-4.2h18.4v4.2h-18.4M15.2 46.2v4.2M18.2 46.2v4.2M22.5 46.2v4.2M23.5 46.2v4.2M27.2 46.2v4.2" fill="none" stroke="#e60e1a" stroke-width=".9"/><path d="M60.3 52v-5h8.7v5" fill="none" stroke="#e60e1a" stroke-width=".8"/><rect x="60.3" y="47" width="2.6" height="3.6" fill="#e60e1a"/><rect x="66.4" y="47" width="2.6" height="3.6" fill="#e60e1a"/><rect x="29" y="24.2" width="3.1" height="3.7" fill="#e60e1a"/><rect x="60.4" y="24.2" width="3.1" height="3.7" fill="#e60e1a"/><g transform="translate(21.8 30.6) rotate(33)"><rect x="-7.5" y="-2.2" width="15" height="4.4" rx="2.2" fill="none" stroke="#e60e1a" stroke-width=".9"/><path d="M-3.7 -2.200v4.400M0 -2.200v4.400M3.7 -2.200v4.4" stroke="#e60e1a" stroke-width=".8"/></g><rect x="13.3" y="40.3" width="1.4" height="1.4" fill="#e60e1a"/><rect x="15.8" y="31.8" width="1.4" height="1.4" fill="#e60e1a"/><rect x="18.8" y="33.8" width="1.4" height="1.4" fill="#e60e1a"/><rect x="21.8" y="35.8" width="1.4" height="1.4" fill="#e60e1a"/><rect x="27.8" y="37.8" width="1.4" height="1.4" fill="#e60e1a"/><rect x="9.8" y="25.8" width="1.4" height="1.4" fill="#e60e1a"/><path d="M6 30.500l3 -3 2 3M86.5 30.500l-3 -3 -2 3" fill="none" stroke="#e60e1a" stroke-width=".8"/><path d="M14 12.400h64M32 25.400h28M10 27.400h72M6 32.200h80M12 34.600h70" stroke="#0f7a2a" stroke-width=".8" stroke-dasharray="1.5 1.5" fill="none"/><path d="M29.5 38.600h53" stroke="#0b6a1e" stroke-width=".9" fill="none"/><path d="M31 4l-19 40M33 6l14 46M62 27l-18 25M85 34l-22 18M8 34l14 18M30 8l22 44" stroke="#0f7a2a" stroke-width=".7" stroke-dasharray="1.3 1.7" fill="none"/><path d="M35.7 -2.300h22M7.5 54.300h77.5" stroke="#27a9e0" stroke-width="1.1"/><path d="M-1.7 40.600v5" stroke="#27a9e0" stroke-width="1"/></g><g transform="translate(339.4 119.0)"><path d="M0.5 19.2h9.7v12.2h-9.7z" fill="none" stroke="#e60e1a" stroke-width="1"/><path d="M0.5 19.2h9.7v12.2h-9.7z" fill="none" stroke="#e60e1a" stroke-width="1" transform="translate(92.5 0) scale(-1 1)"/><path d="M8.4 21.2l20.5 -20.5M10.2 23l20.6 -20.6" fill="none" stroke="#e60e1a" stroke-width="1"/><path d="M8.4 21.2l20.5 -20.5M10.2 23l20.6 -20.6" fill="none" stroke="#e60e1a" stroke-width="1" transform="translate(92.5 0) scale(-1 1)"/><path d="M28.9 0.4h6.8v4h-6.8z" fill="none" stroke="#e60e1a" stroke-width="1"/><path d="M28.9 0.4h6.8v4h-6.8z" fill="none" stroke="#e60e1a" stroke-width="1" transform="translate(92.5 0) scale(-1 1)"/><path d="M5.5 31.4v2.300h3v3h-4.500v3.500h-3.500v13.500h6.500M0.5 39h4v3.500h-4M0.5 45.500h4v5h-4" fill="none" stroke="#e60e1a" stroke-width="1"/><path d="M5.5 31.4v2.300h3v3h-4.500v3.500h-3.500v13.500h6.500M0.5 39h4v3.500h-4M0.5 45.500h4v5h-4" fill="none" stroke="#e60e1a" stroke-width="1" transform="translate(92.5 0) scale(-1 1)"/><path d="M35.7 1h21.100M35.7 2.300h21.1" stroke="#e60e1a" stroke-width=".8" fill="none"/><path d="M7 50.400h5.200M30.6 50.400v1.800h56M7 53.200h79" stroke="#e60e1a" stroke-width=".95" fill="none"/><path d="M12.2 50.4v-4.2h18.4v4.2h-18.4M15.2 46.2v4.2M18.2 46.2v4.2M22.5 46.2v4.2M23.5 46.2v4.2M27.2 46.2v4.2" fill="none" stroke="#e60e1a" stroke-width=".9"/><path d="M60.3 52v-5h8.7v5" fill="none" stroke="#e60e1a" stroke-width=".8"/><rect x="60.3" y="47" width="2.6" height="3.6" fill="#e60e1a"/><rect x="66.4" y="47" width="2.6" height="3.6" fill="#e60e1a"/><rect x="29" y="24.2" width="3.1" height="3.7" fill="#e60e1a"/><rect x="60.4" y="24.2" width="3.1" height="3.7" fill="#e60e1a"/><g transform="translate(21.8 30.6) rotate(33)"><rect x="-7.5" y="-2.2" width="15" height="4.4" rx="2.2" fill="none" stroke="#e60e1a" stroke-width=".9"/><path d="M-3.7 -2.200v4.400M0 -2.200v4.400M3.7 -2.200v4.4" stroke="#e60e1a" stroke-width=".8"/></g><rect x="13.3" y="40.3" width="1.4" height="1.4" fill="#e60e1a"/><rect x="15.8" y="31.8" width="1.4" height="1.4" fill="#e60e1a"/><rect x="18.8" y="33.8" width="1.4" height="1.4" fill="#e60e1a"/><rect x="21.8" y="35.8" width="1.4" height="1.4" fill="#e60e1a"/><rect x="27.8" y="37.8" width="1.4" height="1.4" fill="#e60e1a"/><rect x="9.8" y="25.8" width="1.4" height="1.4" fill="#e60e1a"/><path d="M6 30.500l3 -3 2 3M86.5 30.500l-3 -3 -2 3" fill="none" stroke="#e60e1a" stroke-width=".8"/><path d="M14 12.400h64M32 25.400h28M10 27.400h72M6 32.200h80M12 34.600h70" stroke="#0f7a2a" stroke-width=".8" stroke-dasharray="1.5 1.5" fill="none"/><path d="M29.5 38.600h53" stroke="#0b6a1e" stroke-width=".9" fill="none"/><path d="M31 4l-19 40M33 6l14 46M62 27l-18 25M85 34l-22 18M8 34l14 18M30 8l22 44" stroke="#0f7a2a" stroke-width=".7" stroke-dasharray="1.3 1.7" fill="none"/><path d="M35.7 -2.300h22M7.5 54.300h77.5" stroke="#27a9e0" stroke-width="1.1"/><path d="M-1.7 40.600v5" stroke="#27a9e0" stroke-width="1"/></g><g transform="translate(243.9 279.8) rotate(-90)"><path d="M0.5 19.2h9.7v12.2h-9.7z" fill="none" stroke="#e60e1a" stroke-width="1"/><path d="M0.5 19.2h9.7v12.2h-9.7z" fill="none" stroke="#e60e1a" stroke-width="1" transform="translate(92.5 0) scale(-1 1)"/><path d="M8.4 21.2l20.5 -20.5M10.2 23l20.6 -20.6" fill="none" stroke="#e60e1a" stroke-width="1"/><path d="M8.4 21.2l20.5 -20.5M10.2 23l20.6 -20.6" fill="none" stroke="#e60e1a" stroke-width="1" transform="translate(92.5 0) scale(-1 1)"/><path d="M28.9 0.4h6.8v4h-6.8z" fill="none" stroke="#e60e1a" stroke-width="1"/><path d="M28.9 0.4h6.8v4h-6.8z" fill="none" stroke="#e60e1a" stroke-width="1" transform="translate(92.5 0) scale(-1 1)"/><path d="M5.5 31.4v2.300h3v3h-4.500v3.500h-3.500v13.500h6.500M0.5 39h4v3.500h-4M0.5 45.500h4v5h-4" fill="none" stroke="#e60e1a" stroke-width="1"/><path d="M5.5 31.4v2.300h3v3h-4.500v3.500h-3.500v13.500h6.500M0.5 39h4v3.500h-4M0.5 45.500h4v5h-4" fill="none" stroke="#e60e1a" stroke-width="1" transform="translate(92.5 0) scale(-1 1)"/><path d="M35.7 1h21.100M35.7 2.300h21.1" stroke="#e60e1a" stroke-width=".8" fill="none"/><path d="M7 50.400h5.200M30.6 50.400v1.800h56M7 53.200h79" stroke="#e60e1a" stroke-width=".95" fill="none"/><path d="M12.2 50.4v-4.2h18.4v4.2h-18.4M15.2 46.2v4.2M18.2 46.2v4.2M22.5 46.2v4.2M23.5 46.2v4.2M27.2 46.2v4.2" fill="none" stroke="#e60e1a" stroke-width=".9"/><path d="M60.3 52v-5h8.7v5" fill="none" stroke="#e60e1a" stroke-width=".8"/><rect x="60.3" y="47" width="2.6" height="3.6" fill="#e60e1a"/><rect x="66.4" y="47" width="2.6" height="3.6" fill="#e60e1a"/><rect x="29" y="24.2" width="3.1" height="3.7" fill="#e60e1a"/><rect x="60.4" y="24.2" width="3.1" height="3.7" fill="#e60e1a"/><g transform="translate(21.8 30.6) rotate(33)"><rect x="-7.5" y="-2.2" width="15" height="4.4" rx="2.2" fill="none" stroke="#e60e1a" stroke-width=".9"/><path d="M-3.7 -2.200v4.400M0 -2.200v4.400M3.7 -2.200v4.4" stroke="#e60e1a" stroke-width=".8"/></g><rect x="13.3" y="40.3" width="1.4" height="1.4" fill="#e60e1a"/><rect x="15.8" y="31.8" width="1.4" height="1.4" fill="#e60e1a"/><rect x="18.8" y="33.8" width="1.4" height="1.4" fill="#e60e1a"/><rect x="21.8" y="35.8" width="1.4" height="1.4" fill="#e60e1a"/><rect x="27.8" y="37.8" width="1.4" height="1.4" fill="#e60e1a"/><rect x="9.8" y="25.8" width="1.4" height="1.4" fill="#e60e1a"/><path d="M6 30.500l3 -3 2 3M86.5 30.500l-3 -3 -2 3" fill="none" stroke="#e60e1a" stroke-width=".8"/><path d="M14 12.400h64M32 25.400h28M10 27.400h72M6 32.200h80M12 34.600h70" stroke="#0f7a2a" stroke-width=".8" stroke-dasharray="1.5 1.5" fill="none"/><path d="M29.5 38.600h53" stroke="#0b6a1e" stroke-width=".9" fill="none"/><path d="M31 4l-19 40M33 6l14 46M62 27l-18 25M85 34l-22 18M8 34l14 18M30 8l22 44" stroke="#0f7a2a" stroke-width=".7" stroke-dasharray="1.3 1.7" fill="none"/><path d="M35.7 -2.300h22M7.5 54.300h77.5" stroke="#27a9e0" stroke-width="1.1"/><path d="M-1.7 40.600v5" stroke="#27a9e0" stroke-width="1"/></g><g transform="translate(299.8 279.8) rotate(-90)"><path d="M0.5 19.2h9.7v12.2h-9.7z" fill="none" stroke="#e60e1a" stroke-width="1"/><path d="M0.5 19.2h9.7v12.2h-9.7z" fill="none" stroke="#e60e1a" stroke-width="1" transform="translate(92.5 0) scale(-1 1)"/><path d="M8.4 21.2l20.5 -20.5M10.2 23l20.6 -20.6" fill="none" stroke="#e60e1a" stroke-width="1"/><path d="M8.4 21.2l20.5 -20.5M10.2 23l20.6 -20.6" fill="none" stroke="#e60e1a" stroke-width="1" transform="translate(92.5 0) scale(-1 1)"/><path d="M28.9 0.4h6.8v4h-6.8z" fill="none" stroke="#e60e1a" stroke-width="1"/><path d="M28.9 0.4h6.8v4h-6.8z" fill="none" stroke="#e60e1a" stroke-width="1" transform="translate(92.5 0) scale(-1 1)"/><path d="M5.5 31.4v2.300h3v3h-4.500v3.500h-3.500v13.500h6.500M0.5 39h4v3.500h-4M0.5 45.500h4v5h-4" fill="none" stroke="#e60e1a" stroke-width="1"/><path d="M5.5 31.4v2.300h3v3h-4.500v3.500h-3.500v13.500h6.500M0.5 39h4v3.500h-4M0.5 45.500h4v5h-4" fill="none" stroke="#e60e1a" stroke-width="1" transform="translate(92.5 0) scale(-1 1)"/><path d="M35.7 1h21.100M35.7 2.300h21.1" stroke="#e60e1a" stroke-width=".8" fill="none"/><path d="M7 50.400h5.200M30.6 50.400v1.800h56M7 53.200h79" stroke="#e60e1a" stroke-width=".95" fill="none"/><path d="M12.2 50.4v-4.2h18.4v4.2h-18.4M15.2 46.2v4.2M18.2 46.2v4.2M22.5 46.2v4.2M23.5 46.2v4.2M27.2 46.2v4.2" fill="none" stroke="#e60e1a" stroke-width=".9"/><path d="M60.3 52v-5h8.7v5" fill="none" stroke="#e60e1a" stroke-width=".8"/><rect x="60.3" y="47" width="2.6" height="3.6" fill="#e60e1a"/><rect x="66.4" y="47" width="2.6" height="3.6" fill="#e60e1a"/><rect x="29" y="24.2" width="3.1" height="3.7" fill="#e60e1a"/><rect x="60.4" y="24.2" width="3.1" height="3.7" fill="#e60e1a"/><g transform="translate(21.8 30.6) rotate(33)"><rect x="-7.5" y="-2.2" width="15" height="4.4" rx="2.2" fill="none" stroke="#e60e1a" stroke-width=".9"/><path d="M-3.7 -2.200v4.400M0 -2.200v4.400M3.7 -2.200v4.4" stroke="#e60e1a" stroke-width=".8"/></g><rect x="13.3" y="40.3" width="1.4" height="1.4" fill="#e60e1a"/><rect x="15.8" y="31.8" width="1.4" height="1.4" fill="#e60e1a"/><rect x="18.8" y="33.8" width="1.4" height="1.4" fill="#e60e1a"/><rect x="21.8" y="35.8" width="1.4" height="1.4" fill="#e60e1a"/><rect x="27.8" y="37.8" width="1.4" height="1.4" fill="#e60e1a"/><rect x="9.8" y="25.8" width="1.4" height="1.4" fill="#e60e1a"/><path d="M6 30.500l3 -3 2 3M86.5 30.500l-3 -3 -2 3" fill="none" stroke="#e60e1a" stroke-width=".8"/><path d="M14 12.400h64M32 25.400h28M10 27.400h72M6 32.200h80M12 34.600h70" stroke="#0f7a2a" stroke-width=".8" stroke-dasharray="1.5 1.5" fill="none"/><path d="M29.5 38.600h53" stroke="#0b6a1e" stroke-width=".9" fill="none"/><path d="M31 4l-19 40M33 6l14 46M62 27l-18 25M85 34l-22 18M8 34l14 18M30 8l22 44" stroke="#0f7a2a" stroke-width=".7" stroke-dasharray="1.3 1.7" fill="none"/><path d="M35.7 -2.300h22M7.5 54.300h77.5" stroke="#27a9e0" stroke-width="1.1"/><path d="M-1.7 40.600v5" stroke="#27a9e0" stroke-width="1"/></g><g transform="translate(355.6 279.8) rotate(-90)"><path d="M0.5 19.2h9.7v12.2h-9.7z" fill="none" stroke="#e60e1a" stroke-width="1"/><path d="M0.5 19.2h9.7v12.2h-9.7z" fill="none" stroke="#e60e1a" stroke-width="1" transform="translate(92.5 0) scale(-1 1)"/><path d="M8.4 21.2l20.5 -20.5M10.2 23l20.6 -20.6" fill="none" stroke="#e60e1a" stroke-width="1"/><path d="M8.4 21.2l20.5 -20.5M10.2 23l20.6 -20.6" fill="none" stroke="#e60e1a" stroke-width="1" transform="translate(92.5 0) scale(-1 1)"/><path d="M28.9 0.4h6.8v4h-6.8z" fill="none" stroke="#e60e1a" stroke-width="1"/><path d="M28.9 0.4h6.8v4h-6.8z" fill="none" stroke="#e60e1a" stroke-width="1" transform="translate(92.5 0) scale(-1 1)"/><path d="M5.5 31.4v2.300h3v3h-4.500v3.500h-3.500v13.500h6.500M0.5 39h4v3.500h-4M0.5 45.500h4v5h-4" fill="none" stroke="#e60e1a" stroke-width="1"/><path d="M5.5 31.4v2.300h3v3h-4.500v3.500h-3.500v13.500h6.500M0.5 39h4v3.500h-4M0.5 45.500h4v5h-4" fill="none" stroke="#e60e1a" stroke-width="1" transform="translate(92.5 0) scale(-1 1)"/><path d="M35.7 1h21.100M35.7 2.300h21.1" stroke="#e60e1a" stroke-width=".8" fill="none"/><path d="M7 50.400h5.200M30.6 50.400v1.800h56M7 53.200h79" stroke="#e60e1a" stroke-width=".95" fill="none"/><path d="M12.2 50.4v-4.2h18.4v4.2h-18.4M15.2 46.2v4.2M18.2 46.2v4.2M22.5 46.2v4.2M23.5 46.2v4.2M27.2 46.2v4.2" fill="none" stroke="#e60e1a" stroke-width=".9"/><path d="M60.3 52v-5h8.7v5" fill="none" stroke="#e60e1a" stroke-width=".8"/><rect x="60.3" y="47" width="2.6" height="3.6" fill="#e60e1a"/><rect x="66.4" y="47" width="2.6" height="3.6" fill="#e60e1a"/><rect x="29" y="24.2" width="3.1" height="3.7" fill="#e60e1a"/><rect x="60.4" y="24.2" width="3.1" height="3.7" fill="#e60e1a"/><g transform="translate(21.8 30.6) rotate(33)"><rect x="-7.5" y="-2.2" width="15" height="4.4" rx="2.2" fill="none" stroke="#e60e1a" stroke-width=".9"/><path d="M-3.7 -2.200v4.400M0 -2.200v4.400M3.7 -2.200v4.4" stroke="#e60e1a" stroke-width=".8"/></g><rect x="13.3" y="40.3" width="1.4" height="1.4" fill="#e60e1a"/><rect x="15.8" y="31.8" width="1.4" height="1.4" fill="#e60e1a"/><rect x="18.8" y="33.8" width="1.4" height="1.4" fill="#e60e1a"/><rect x="21.8" y="35.8" width="1.4" height="1.4" fill="#e60e1a"/><rect x="27.8" y="37.8" width="1.4" height="1.4" fill="#e60e1a"/><rect x="9.8" y="25.8" width="1.4" height="1.4" fill="#e60e1a"/><path d="M6 30.500l3 -3 2 3M86.5 30.500l-3 -3 -2 3" fill="none" stroke="#e60e1a" stroke-width=".8"/><path d="M14 12.400h64M32 25.400h28M10 27.400h72M6 32.200h80M12 34.600h70" stroke="#0f7a2a" stroke-width=".8" stroke-dasharray="1.5 1.5" fill="none"/><path d="M29.5 38.600h53" stroke="#0b6a1e" stroke-width=".9" fill="none"/><path d="M31 4l-19 40M33 6l14 46M62 27l-18 25M85 34l-22 18M8 34l14 18M30 8l22 44" stroke="#0f7a2a" stroke-width=".7" stroke-dasharray="1.3 1.7" fill="none"/><path d="M35.7 -2.300h22M7.5 54.300h77.5" stroke="#27a9e0" stroke-width="1.1"/><path d="M-1.7 40.600v5" stroke="#27a9e0" stroke-width="1"/></g><g transform="translate(411.3 279.8) rotate(-90)"><path d="M0.5 19.2h9.7v12.2h-9.7z" fill="none" stroke="#e60e1a" stroke-width="1"/><path d="M0.5 19.2h9.7v12.2h-9.7z" fill="none" stroke="#e60e1a" stroke-width="1" transform="translate(92.5 0) scale(-1 1)"/><path d="M8.4 21.2l20.5 -20.5M10.2 23l20.6 -20.6" fill="none" stroke="#e60e1a" stroke-width="1"/><path d="M8.4 21.2l20.5 -20.5M10.2 23l20.6 -20.6" fill="none" stroke="#e60e1a" stroke-width="1" transform="translate(92.5 0) scale(-1 1)"/><path d="M28.9 0.4h6.8v4h-6.8z" fill="none" stroke="#e60e1a" stroke-width="1"/><path d="M28.9 0.4h6.8v4h-6.8z" fill="none" stroke="#e60e1a" stroke-width="1" transform="translate(92.5 0) scale(-1 1)"/><path d="M5.5 31.4v2.300h3v3h-4.500v3.500h-3.500v13.500h6.500M0.5 39h4v3.500h-4M0.5 45.500h4v5h-4" fill="none" stroke="#e60e1a" stroke-width="1"/><path d="M5.5 31.4v2.300h3v3h-4.500v3.500h-3.500v13.500h6.500M0.5 39h4v3.500h-4M0.5 45.500h4v5h-4" fill="none" stroke="#e60e1a" stroke-width="1" transform="translate(92.5 0) scale(-1 1)"/><path d="M35.7 1h21.100M35.7 2.300h21.1" stroke="#e60e1a" stroke-width=".8" fill="none"/><path d="M7 50.400h5.200M30.6 50.400v1.800h56M7 53.200h79" stroke="#e60e1a" stroke-width=".95" fill="none"/><path d="M12.2 50.4v-4.2h18.4v4.2h-18.4M15.2 46.2v4.2M18.2 46.2v4.2M22.5 46.2v4.2M23.5 46.2v4.2M27.2 46.2v4.2" fill="none" stroke="#e60e1a" stroke-width=".9"/><path d="M60.3 52v-5h8.7v5" fill="none" stroke="#e60e1a" stroke-width=".8"/><rect x="60.3" y="47" width="2.6" height="3.6" fill="#e60e1a"/><rect x="66.4" y="47" width="2.6" height="3.6" fill="#e60e1a"/><rect x="29" y="24.2" width="3.1" height="3.7" fill="#e60e1a"/><rect x="60.4" y="24.2" width="3.1" height="3.7" fill="#e60e1a"/><g transform="translate(21.8 30.6) rotate(33)"><rect x="-7.5" y="-2.2" width="15" height="4.4" rx="2.2" fill="none" stroke="#e60e1a" stroke-width=".9"/><path d="M-3.7 -2.200v4.400M0 -2.200v4.400M3.7 -2.200v4.4" stroke="#e60e1a" stroke-width=".8"/></g><rect x="13.3" y="40.3" width="1.4" height="1.4" fill="#e60e1a"/><rect x="15.8" y="31.8" width="1.4" height="1.4" fill="#e60e1a"/><rect x="18.8" y="33.8" width="1.4" height="1.4" fill="#e60e1a"/><rect x="21.8" y="35.8" width="1.4" height="1.4" fill="#e60e1a"/><rect x="27.8" y="37.8" width="1.4" height="1.4" fill="#e60e1a"/><rect x="9.8" y="25.8" width="1.4" height="1.4" fill="#e60e1a"/><path d="M6 30.500l3 -3 2 3M86.5 30.500l-3 -3 -2 3" fill="none" stroke="#e60e1a" stroke-width=".8"/><path d="M14 12.400h64M32 25.400h28M10 27.400h72M6 32.200h80M12 34.600h70" stroke="#0f7a2a" stroke-width=".8" stroke-dasharray="1.5 1.5" fill="none"/><path d="M29.5 38.600h53" stroke="#0b6a1e" stroke-width=".9" fill="none"/><path d="M31 4l-19 40M33 6l14 46M62 27l-18 25M85 34l-22 18M8 34l14 18M30 8l22 44" stroke="#0f7a2a" stroke-width=".7" stroke-dasharray="1.3 1.7" fill="none"/><path d="M35.7 -2.300h22M7.5 54.300h77.5" stroke="#27a9e0" stroke-width="1.1"/><path d="M-1.7 40.600v5" stroke="#27a9e0" stroke-width="1"/></g><g transform="translate(243.9 376.4) rotate(-90)"><path d="M0.5 19.2h9.7v12.2h-9.7z" fill="none" stroke="#e60e1a" stroke-width="1"/><path d="M0.5 19.2h9.7v12.2h-9.7z" fill="none" stroke="#e60e1a" stroke-width="1" transform="translate(92.5 0) scale(-1 1)"/><path d="M8.4 21.2l20.5 -20.5M10.2 23l20.6 -20.6" fill="none" stroke="#e60e1a" stroke-width="1"/><path d="M8.4 21.2l20.5 -20.5M10.2 23l20.6 -20.6" fill="none" stroke="#e60e1a" stroke-width="1" transform="translate(92.5 0) scale(-1 1)"/><path d="M28.9 0.4h6.8v4h-6.8z" fill="none" stroke="#e60e1a" stroke-width="1"/><path d="M28.9 0.4h6.8v4h-6.8z" fill="none" stroke="#e60e1a" stroke-width="1" transform="translate(92.5 0) scale(-1 1)"/><path d="M5.5 31.4v2.300h3v3h-4.500v3.500h-3.500v13.500h6.500M0.5 39h4v3.500h-4M0.5 45.500h4v5h-4" fill="none" stroke="#e60e1a" stroke-width="1"/><path d="M5.5 31.4v2.300h3v3h-4.500v3.500h-3.500v13.500h6.500M0.5 39h4v3.500h-4M0.5 45.500h4v5h-4" fill="none" stroke="#e60e1a" stroke-width="1" transform="translate(92.5 0) scale(-1 1)"/><path d="M35.7 1h21.100M35.7 2.300h21.1" stroke="#e60e1a" stroke-width=".8" fill="none"/><path d="M7 50.400h5.200M30.6 50.400v1.800h56M7 53.200h79" stroke="#e60e1a" stroke-width=".95" fill="none"/><path d="M12.2 50.4v-4.2h18.4v4.2h-18.4M15.2 46.2v4.2M18.2 46.2v4.2M22.5 46.2v4.2M23.5 46.2v4.2M27.2 46.2v4.2" fill="none" stroke="#e60e1a" stroke-width=".9"/><path d="M60.3 52v-5h8.7v5" fill="none" stroke="#e60e1a" stroke-width=".8"/><rect x="60.3" y="47" width="2.6" height="3.6" fill="#e60e1a"/><rect x="66.4" y="47" width="2.6" height="3.6" fill="#e60e1a"/><rect x="29" y="24.2" width="3.1" height="3.7" fill="#e60e1a"/><rect x="60.4" y="24.2" width="3.1" height="3.7" fill="#e60e1a"/><g transform="translate(21.8 30.6) rotate(33)"><rect x="-7.5" y="-2.2" width="15" height="4.4" rx="2.2" fill="none" stroke="#e60e1a" stroke-width=".9"/><path d="M-3.7 -2.200v4.400M0 -2.200v4.400M3.7 -2.200v4.4" stroke="#e60e1a" stroke-width=".8"/></g><rect x="13.3" y="40.3" width="1.4" height="1.4" fill="#e60e1a"/><rect x="15.8" y="31.8" width="1.4" height="1.4" fill="#e60e1a"/><rect x="18.8" y="33.8" width="1.4" height="1.4" fill="#e60e1a"/><rect x="21.8" y="35.8" width="1.4" height="1.4" fill="#e60e1a"/><rect x="27.8" y="37.8" width="1.4" height="1.4" fill="#e60e1a"/><rect x="9.8" y="25.8" width="1.4" height="1.4" fill="#e60e1a"/><path d="M6 30.500l3 -3 2 3M86.5 30.500l-3 -3 -2 3" fill="none" stroke="#e60e1a" stroke-width=".8"/><path d="M14 12.400h64M32 25.400h28M10 27.400h72M6 32.200h80M12 34.600h70" stroke="#0f7a2a" stroke-width=".8" stroke-dasharray="1.5 1.5" fill="none"/><path d="M29.5 38.600h53" stroke="#0b6a1e" stroke-width=".9" fill="none"/><path d="M31 4l-19 40M33 6l14 46M62 27l-18 25M85 34l-22 18M8 34l14 18M30 8l22 44" stroke="#0f7a2a" stroke-width=".7" stroke-dasharray="1.3 1.7" fill="none"/><path d="M35.7 -2.300h22M7.5 54.300h77.5" stroke="#27a9e0" stroke-width="1.1"/><path d="M-1.7 40.600v5" stroke="#27a9e0" stroke-width="1"/></g><g transform="translate(299.8 376.4) rotate(-90)"><path d="M0.5 19.2h9.7v12.2h-9.7z" fill="none" stroke="#e60e1a" stroke-width="1"/><path d="M0.5 19.2h9.7v12.2h-9.7z" fill="none" stroke="#e60e1a" stroke-width="1" transform="translate(92.5 0) scale(-1 1)"/><path d="M8.4 21.2l20.5 -20.5M10.2 23l20.6 -20.6" fill="none" stroke="#e60e1a" stroke-width="1"/><path d="M8.4 21.2l20.5 -20.5M10.2 23l20.6 -20.6" fill="none" stroke="#e60e1a" stroke-width="1" transform="translate(92.5 0) scale(-1 1)"/><path d="M28.9 0.4h6.8v4h-6.8z" fill="none" stroke="#e60e1a" stroke-width="1"/><path d="M28.9 0.4h6.8v4h-6.8z" fill="none" stroke="#e60e1a" stroke-width="1" transform="translate(92.5 0) scale(-1 1)"/><path d="M5.5 31.4v2.300h3v3h-4.500v3.500h-3.500v13.500h6.500M0.5 39h4v3.500h-4M0.5 45.500h4v5h-4" fill="none" stroke="#e60e1a" stroke-width="1"/><path d="M5.5 31.4v2.300h3v3h-4.500v3.500h-3.500v13.500h6.500M0.5 39h4v3.500h-4M0.5 45.500h4v5h-4" fill="none" stroke="#e60e1a" stroke-width="1" transform="translate(92.5 0) scale(-1 1)"/><path d="M35.7 1h21.100M35.7 2.300h21.1" stroke="#e60e1a" stroke-width=".8" fill="none"/><path d="M7 50.400h5.200M30.6 50.400v1.800h56M7 53.200h79" stroke="#e60e1a" stroke-width=".95" fill="none"/><path d="M12.2 50.4v-4.2h18.4v4.2h-18.4M15.2 46.2v4.2M18.2 46.2v4.2M22.5 46.2v4.2M23.5 46.2v4.2M27.2 46.2v4.2" fill="none" stroke="#e60e1a" stroke-width=".9"/><path d="M60.3 52v-5h8.7v5" fill="none" stroke="#e60e1a" stroke-width=".8"/><rect x="60.3" y="47" width="2.6" height="3.6" fill="#e60e1a"/><rect x="66.4" y="47" width="2.6" height="3.6" fill="#e60e1a"/><rect x="29" y="24.2" width="3.1" height="3.7" fill="#e60e1a"/><rect x="60.4" y="24.2" width="3.1" height="3.7" fill="#e60e1a"/><g transform="translate(21.8 30.6) rotate(33)"><rect x="-7.5" y="-2.2" width="15" height="4.4" rx="2.2" fill="none" stroke="#e60e1a" stroke-width=".9"/><path d="M-3.7 -2.200v4.400M0 -2.200v4.400M3.7 -2.200v4.4" stroke="#e60e1a" stroke-width=".8"/></g><rect x="13.3" y="40.3" width="1.4" height="1.4" fill="#e60e1a"/><rect x="15.8" y="31.8" width="1.4" height="1.4" fill="#e60e1a"/><rect x="18.8" y="33.8" width="1.4" height="1.4" fill="#e60e1a"/><rect x="21.8" y="35.8" width="1.4" height="1.4" fill="#e60e1a"/><rect x="27.8" y="37.8" width="1.4" height="1.4" fill="#e60e1a"/><rect x="9.8" y="25.8" width="1.4" height="1.4" fill="#e60e1a"/><path d="M6 30.500l3 -3 2 3M86.5 30.500l-3 -3 -2 3" fill="none" stroke="#e60e1a" stroke-width=".8"/><path d="M14 12.400h64M32 25.400h28M10 27.400h72M6 32.200h80M12 34.600h70" stroke="#0f7a2a" stroke-width=".8" stroke-dasharray="1.5 1.5" fill="none"/><path d="M29.5 38.600h53" stroke="#0b6a1e" stroke-width=".9" fill="none"/><path d="M31 4l-19 40M33 6l14 46M62 27l-18 25M85 34l-22 18M8 34l14 18M30 8l22 44" stroke="#0f7a2a" stroke-width=".7" stroke-dasharray="1.3 1.7" fill="none"/><path d="M35.7 -2.300h22M7.5 54.300h77.5" stroke="#27a9e0" stroke-width="1.1"/><path d="M-1.7 40.600v5" stroke="#27a9e0" stroke-width="1"/></g><g transform="translate(355.6 376.4) rotate(-90)"><path d="M0.5 19.2h9.7v12.2h-9.7z" fill="none" stroke="#e60e1a" stroke-width="1"/><path d="M0.5 19.2h9.7v12.2h-9.7z" fill="none" stroke="#e60e1a" stroke-width="1" transform="translate(92.5 0) scale(-1 1)"/><path d="M8.4 21.2l20.5 -20.5M10.2 23l20.6 -20.6" fill="none" stroke="#e60e1a" stroke-width="1"/><path d="M8.4 21.2l20.5 -20.5M10.2 23l20.6 -20.6" fill="none" stroke="#e60e1a" stroke-width="1" transform="translate(92.5 0) scale(-1 1)"/><path d="M28.9 0.4h6.8v4h-6.8z" fill="none" stroke="#e60e1a" stroke-width="1"/><path d="M28.9 0.4h6.8v4h-6.8z" fill="none" stroke="#e60e1a" stroke-width="1" transform="translate(92.5 0) scale(-1 1)"/><path d="M5.5 31.4v2.300h3v3h-4.500v3.500h-3.500v13.500h6.500M0.5 39h4v3.500h-4M0.5 45.500h4v5h-4" fill="none" stroke="#e60e1a" stroke-width="1"/><path d="M5.5 31.4v2.300h3v3h-4.500v3.500h-3.500v13.500h6.500M0.5 39h4v3.500h-4M0.5 45.500h4v5h-4" fill="none" stroke="#e60e1a" stroke-width="1" transform="translate(92.5 0) scale(-1 1)"/><path d="M35.7 1h21.100M35.7 2.300h21.1" stroke="#e60e1a" stroke-width=".8" fill="none"/><path d="M7 50.400h5.200M30.6 50.400v1.800h56M7 53.200h79" stroke="#e60e1a" stroke-width=".95" fill="none"/><path d="M12.2 50.4v-4.2h18.4v4.2h-18.4M15.2 46.2v4.2M18.2 46.2v4.2M22.5 46.2v4.2M23.5 46.2v4.2M27.2 46.2v4.2" fill="none" stroke="#e60e1a" stroke-width=".9"/><path d="M60.3 52v-5h8.7v5" fill="none" stroke="#e60e1a" stroke-width=".8"/><rect x="60.3" y="47" width="2.6" height="3.6" fill="#e60e1a"/><rect x="66.4" y="47" width="2.6" height="3.6" fill="#e60e1a"/><rect x="29" y="24.2" width="3.1" height="3.7" fill="#e60e1a"/><rect x="60.4" y="24.2" width="3.1" height="3.7" fill="#e60e1a"/><g transform="translate(21.8 30.6) rotate(33)"><rect x="-7.5" y="-2.2" width="15" height="4.4" rx="2.2" fill="none" stroke="#e60e1a" stroke-width=".9"/><path d="M-3.7 -2.200v4.400M0 -2.200v4.400M3.7 -2.200v4.4" stroke="#e60e1a" stroke-width=".8"/></g><rect x="13.3" y="40.3" width="1.4" height="1.4" fill="#e60e1a"/><rect x="15.8" y="31.8" width="1.4" height="1.4" fill="#e60e1a"/><rect x="18.8" y="33.8" width="1.4" height="1.4" fill="#e60e1a"/><rect x="21.8" y="35.8" width="1.4" height="1.4" fill="#e60e1a"/><rect x="27.8" y="37.8" width="1.4" height="1.4" fill="#e60e1a"/><rect x="9.8" y="25.8" width="1.4" height="1.4" fill="#e60e1a"/><path d="M6 30.500l3 -3 2 3M86.5 30.500l-3 -3 -2 3" fill="none" stroke="#e60e1a" stroke-width=".8"/><path d="M14 12.400h64M32 25.400h28M10 27.400h72M6 32.200h80M12 34.600h70" stroke="#0f7a2a" stroke-width=".8" stroke-dasharray="1.5 1.5" fill="none"/><path d="M29.5 38.600h53" stroke="#0b6a1e" stroke-width=".9" fill="none"/><path d="M31 4l-19 40M33 6l14 46M62 27l-18 25M85 34l-22 18M8 34l14 18M30 8l22 44" stroke="#0f7a2a" stroke-width=".7" stroke-dasharray="1.3 1.7" fill="none"/><path d="M35.7 -2.300h22M7.5 54.300h77.5" stroke="#27a9e0" stroke-width="1.1"/><path d="M-1.7 40.600v5" stroke="#27a9e0" stroke-width="1"/></g><g transform="translate(411.3 376.4) rotate(-90)"><path d="M0.5 19.2h9.7v12.2h-9.7z" fill="none" stroke="#e60e1a" stroke-width="1"/><path d="M0.5 19.2h9.7v12.2h-9.7z" fill="none" stroke="#e60e1a" stroke-width="1" transform="translate(92.5 0) scale(-1 1)"/><path d="M8.4 21.2l20.5 -20.5M10.2 23l20.6 -20.6" fill="none" stroke="#e60e1a" stroke-width="1"/><path d="M8.4 21.2l20.5 -20.5M10.2 23l20.6 -20.6" fill="none" stroke="#e60e1a" stroke-width="1" transform="translate(92.5 0) scale(-1 1)"/><path d="M28.9 0.4h6.8v4h-6.8z" fill="none" stroke="#e60e1a" stroke-width="1"/><path d="M28.9 0.4h6.8v4h-6.8z" fill="none" stroke="#e60e1a" stroke-width="1" transform="translate(92.5 0) scale(-1 1)"/><path d="M5.5 31.4v2.300h3v3h-4.500v3.500h-3.500v13.500h6.500M0.5 39h4v3.500h-4M0.5 45.500h4v5h-4" fill="none" stroke="#e60e1a" stroke-width="1"/><path d="M5.5 31.4v2.300h3v3h-4.500v3.500h-3.500v13.500h6.500M0.5 39h4v3.500h-4M0.5 45.500h4v5h-4" fill="none" stroke="#e60e1a" stroke-width="1" transform="translate(92.5 0) scale(-1 1)"/><path d="M35.7 1h21.100M35.7 2.300h21.1" stroke="#e60e1a" stroke-width=".8" fill="none"/><path d="M7 50.400h5.200M30.6 50.400v1.800h56M7 53.200h79" stroke="#e60e1a" stroke-width=".95" fill="none"/><path d="M12.2 50.4v-4.2h18.4v4.2h-18.4M15.2 46.2v4.2M18.2 46.2v4.2M22.5 46.2v4.2M23.5 46.2v4.2M27.2 46.2v4.2" fill="none" stroke="#e60e1a" stroke-width=".9"/><path d="M60.3 52v-5h8.7v5" fill="none" stroke="#e60e1a" stroke-width=".8"/><rect x="60.3" y="47" width="2.6" height="3.6" fill="#e60e1a"/><rect x="66.4" y="47" width="2.6" height="3.6" fill="#e60e1a"/><rect x="29" y="24.2" width="3.1" height="3.7" fill="#e60e1a"/><rect x="60.4" y="24.2" width="3.1" height="3.7" fill="#e60e1a"/><g transform="translate(21.8 30.6) rotate(33)"><rect x="-7.5" y="-2.2" width="15" height="4.4" rx="2.2" fill="none" stroke="#e60e1a" stroke-width=".9"/><path d="M-3.7 -2.200v4.400M0 -2.200v4.400M3.7 -2.200v4.4" stroke="#e60e1a" stroke-width=".8"/></g><rect x="13.3" y="40.3" width="1.4" height="1.4" fill="#e60e1a"/><rect x="15.8" y="31.8" width="1.4" height="1.4" fill="#e60e1a"/><rect x="18.8" y="33.8" width="1.4" height="1.4" fill="#e60e1a"/><rect x="21.8" y="35.8" width="1.4" height="1.4" fill="#e60e1a"/><rect x="27.8" y="37.8" width="1.4" height="1.4" fill="#e60e1a"/><rect x="9.8" y="25.8" width="1.4" height="1.4" fill="#e60e1a"/><path d="M6 30.500l3 -3 2 3M86.5 30.500l-3 -3 -2 3" fill="none" stroke="#e60e1a" stroke-width=".8"/><path d="M14 12.400h64M32 25.400h28M10 27.400h72M6 32.200h80M12 34.600h70" stroke="#0f7a2a" stroke-width=".8" stroke-dasharray="1.5 1.5" fill="none"/><path d="M29.5 38.600h53" stroke="#0b6a1e" stroke-width=".9" fill="none"/><path d="M31 4l-19 40M33 6l14 46M62 27l-18 25M85 34l-22 18M8 34l14 18M30 8l22 44" stroke="#0f7a2a" stroke-width=".7" stroke-dasharray="1.3 1.7" fill="none"/><path d="M35.7 -2.300h22M7.5 54.300h77.5" stroke="#27a9e0" stroke-width="1.1"/><path d="M-1.7 40.600v5" stroke="#27a9e0" stroke-width="1"/></g><g transform="translate(243.9 471.9) rotate(-90)"><path d="M0.5 19.2h9.7v12.2h-9.7z" fill="none" stroke="#e60e1a" stroke-width="1"/><path d="M0.5 19.2h9.7v12.2h-9.7z" fill="none" stroke="#e60e1a" stroke-width="1" transform="translate(92.5 0) scale(-1 1)"/><path d="M8.4 21.2l20.5 -20.5M10.2 23l20.6 -20.6" fill="none" stroke="#e60e1a" stroke-width="1"/><path d="M8.4 21.2l20.5 -20.5M10.2 23l20.6 -20.6" fill="none" stroke="#e60e1a" stroke-width="1" transform="translate(92.5 0) scale(-1 1)"/><path d="M28.9 0.4h6.8v4h-6.8z" fill="none" stroke="#e60e1a" stroke-width="1"/><path d="M28.9 0.4h6.8v4h-6.8z" fill="none" stroke="#e60e1a" stroke-width="1" transform="translate(92.5 0) scale(-1 1)"/><path d="M5.5 31.4v2.300h3v3h-4.500v3.500h-3.500v13.500h6.500M0.5 39h4v3.500h-4M0.5 45.500h4v5h-4" fill="none" stroke="#e60e1a" stroke-width="1"/><path d="M5.5 31.4v2.300h3v3h-4.500v3.500h-3.500v13.500h6.500M0.5 39h4v3.500h-4M0.5 45.500h4v5h-4" fill="none" stroke="#e60e1a" stroke-width="1" transform="translate(92.5 0) scale(-1 1)"/><path d="M35.7 1h21.100M35.7 2.300h21.1" stroke="#e60e1a" stroke-width=".8" fill="none"/><path d="M7 50.400h5.200M30.6 50.400v1.800h56M7 53.200h79" stroke="#e60e1a" stroke-width=".95" fill="none"/><path d="M12.2 50.4v-4.2h18.4v4.2h-18.4M15.2 46.2v4.2M18.2 46.2v4.2M22.5 46.2v4.2M23.5 46.2v4.2M27.2 46.2v4.2" fill="none" stroke="#e60e1a" stroke-width=".9"/><path d="M60.3 52v-5h8.7v5" fill="none" stroke="#e60e1a" stroke-width=".8"/><rect x="60.3" y="47" width="2.6" height="3.6" fill="#e60e1a"/><rect x="66.4" y="47" width="2.6" height="3.6" fill="#e60e1a"/><rect x="29" y="24.2" width="3.1" height="3.7" fill="#e60e1a"/><rect x="60.4" y="24.2" width="3.1" height="3.7" fill="#e60e1a"/><g transform="translate(21.8 30.6) rotate(33)"><rect x="-7.5" y="-2.2" width="15" height="4.4" rx="2.2" fill="none" stroke="#e60e1a" stroke-width=".9"/><path d="M-3.7 -2.200v4.400M0 -2.200v4.400M3.7 -2.200v4.4" stroke="#e60e1a" stroke-width=".8"/></g><rect x="13.3" y="40.3" width="1.4" height="1.4" fill="#e60e1a"/><rect x="15.8" y="31.8" width="1.4" height="1.4" fill="#e60e1a"/><rect x="18.8" y="33.8" width="1.4" height="1.4" fill="#e60e1a"/><rect x="21.8" y="35.8" width="1.4" height="1.4" fill="#e60e1a"/><rect x="27.8" y="37.8" width="1.4" height="1.4" fill="#e60e1a"/><rect x="9.8" y="25.8" width="1.4" height="1.4" fill="#e60e1a"/><path d="M6 30.500l3 -3 2 3M86.5 30.500l-3 -3 -2 3" fill="none" stroke="#e60e1a" stroke-width=".8"/><path d="M14 12.400h64M32 25.400h28M10 27.400h72M6 32.200h80M12 34.600h70" stroke="#0f7a2a" stroke-width=".8" stroke-dasharray="1.5 1.5" fill="none"/><path d="M29.5 38.600h53" stroke="#0b6a1e" stroke-width=".9" fill="none"/><path d="M31 4l-19 40M33 6l14 46M62 27l-18 25M85 34l-22 18M8 34l14 18M30 8l22 44" stroke="#0f7a2a" stroke-width=".7" stroke-dasharray="1.3 1.7" fill="none"/><path d="M35.7 -2.300h22M7.5 54.300h77.5" stroke="#27a9e0" stroke-width="1.1"/><path d="M-1.7 40.600v5" stroke="#27a9e0" stroke-width="1"/></g><g transform="translate(299.8 471.9) rotate(-90)"><path d="M0.5 19.2h9.7v12.2h-9.7z" fill="none" stroke="#e60e1a" stroke-width="1"/><path d="M0.5 19.2h9.7v12.2h-9.7z" fill="none" stroke="#e60e1a" stroke-width="1" transform="translate(92.5 0) scale(-1 1)"/><path d="M8.4 21.2l20.5 -20.5M10.2 23l20.6 -20.6" fill="none" stroke="#e60e1a" stroke-width="1"/><path d="M8.4 21.2l20.5 -20.5M10.2 23l20.6 -20.6" fill="none" stroke="#e60e1a" stroke-width="1" transform="translate(92.5 0) scale(-1 1)"/><path d="M28.9 0.4h6.8v4h-6.8z" fill="none" stroke="#e60e1a" stroke-width="1"/><path d="M28.9 0.4h6.8v4h-6.8z" fill="none" stroke="#e60e1a" stroke-width="1" transform="translate(92.5 0) scale(-1 1)"/><path d="M5.5 31.4v2.300h3v3h-4.500v3.500h-3.500v13.500h6.500M0.5 39h4v3.500h-4M0.5 45.500h4v5h-4" fill="none" stroke="#e60e1a" stroke-width="1"/><path d="M5.5 31.4v2.300h3v3h-4.500v3.500h-3.500v13.500h6.500M0.5 39h4v3.500h-4M0.5 45.500h4v5h-4" fill="none" stroke="#e60e1a" stroke-width="1" transform="translate(92.5 0) scale(-1 1)"/><path d="M35.7 1h21.100M35.7 2.300h21.1" stroke="#e60e1a" stroke-width=".8" fill="none"/><path d="M7 50.400h5.200M30.6 50.400v1.800h56M7 53.200h79" stroke="#e60e1a" stroke-width=".95" fill="none"/><path d="M12.2 50.4v-4.2h18.4v4.2h-18.4M15.2 46.2v4.2M18.2 46.2v4.2M22.5 46.2v4.2M23.5 46.2v4.2M27.2 46.2v4.2" fill="none" stroke="#e60e1a" stroke-width=".9"/><path d="M60.3 52v-5h8.7v5" fill="none" stroke="#e60e1a" stroke-width=".8"/><rect x="60.3" y="47" width="2.6" height="3.6" fill="#e60e1a"/><rect x="66.4" y="47" width="2.6" height="3.6" fill="#e60e1a"/><rect x="29" y="24.2" width="3.1" height="3.7" fill="#e60e1a"/><rect x="60.4" y="24.2" width="3.1" height="3.7" fill="#e60e1a"/><g transform="translate(21.8 30.6) rotate(33)"><rect x="-7.5" y="-2.2" width="15" height="4.4" rx="2.2" fill="none" stroke="#e60e1a" stroke-width=".9"/><path d="M-3.7 -2.200v4.400M0 -2.200v4.400M3.7 -2.200v4.4" stroke="#e60e1a" stroke-width=".8"/></g><rect x="13.3" y="40.3" width="1.4" height="1.4" fill="#e60e1a"/><rect x="15.8" y="31.8" width="1.4" height="1.4" fill="#e60e1a"/><rect x="18.8" y="33.8" width="1.4" height="1.4" fill="#e60e1a"/><rect x="21.8" y="35.8" width="1.4" height="1.4" fill="#e60e1a"/><rect x="27.8" y="37.8" width="1.4" height="1.4" fill="#e60e1a"/><rect x="9.8" y="25.8" width="1.4" height="1.4" fill="#e60e1a"/><path d="M6 30.500l3 -3 2 3M86.5 30.500l-3 -3 -2 3" fill="none" stroke="#e60e1a" stroke-width=".8"/><path d="M14 12.400h64M32 25.400h28M10 27.400h72M6 32.200h80M12 34.600h70" stroke="#0f7a2a" stroke-width=".8" stroke-dasharray="1.5 1.5" fill="none"/><path d="M29.5 38.600h53" stroke="#0b6a1e" stroke-width=".9" fill="none"/><path d="M31 4l-19 40M33 6l14 46M62 27l-18 25M85 34l-22 18M8 34l14 18M30 8l22 44" stroke="#0f7a2a" stroke-width=".7" stroke-dasharray="1.3 1.7" fill="none"/><path d="M35.7 -2.300h22M7.5 54.300h77.5" stroke="#27a9e0" stroke-width="1.1"/><path d="M-1.7 40.600v5" stroke="#27a9e0" stroke-width="1"/></g><g transform="translate(355.6 471.9) rotate(-90)"><path d="M0.5 19.2h9.7v12.2h-9.7z" fill="none" stroke="#e60e1a" stroke-width="1"/><path d="M0.5 19.2h9.7v12.2h-9.7z" fill="none" stroke="#e60e1a" stroke-width="1" transform="translate(92.5 0) scale(-1 1)"/><path d="M8.4 21.2l20.5 -20.5M10.2 23l20.6 -20.6" fill="none" stroke="#e60e1a" stroke-width="1"/><path d="M8.4 21.2l20.5 -20.5M10.2 23l20.6 -20.6" fill="none" stroke="#e60e1a" stroke-width="1" transform="translate(92.5 0) scale(-1 1)"/><path d="M28.9 0.4h6.8v4h-6.8z" fill="none" stroke="#e60e1a" stroke-width="1"/><path d="M28.9 0.4h6.8v4h-6.8z" fill="none" stroke="#e60e1a" stroke-width="1" transform="translate(92.5 0) scale(-1 1)"/><path d="M5.5 31.4v2.300h3v3h-4.500v3.500h-3.500v13.500h6.500M0.5 39h4v3.500h-4M0.5 45.500h4v5h-4" fill="none" stroke="#e60e1a" stroke-width="1"/><path d="M5.5 31.4v2.300h3v3h-4.500v3.500h-3.500v13.500h6.500M0.5 39h4v3.500h-4M0.5 45.500h4v5h-4" fill="none" stroke="#e60e1a" stroke-width="1" transform="translate(92.5 0) scale(-1 1)"/><path d="M35.7 1h21.100M35.7 2.300h21.1" stroke="#e60e1a" stroke-width=".8" fill="none"/><path d="M7 50.400h5.200M30.6 50.400v1.800h56M7 53.200h79" stroke="#e60e1a" stroke-width=".95" fill="none"/><path d="M12.2 50.4v-4.2h18.4v4.2h-18.4M15.2 46.2v4.2M18.2 46.2v4.2M22.5 46.2v4.2M23.5 46.2v4.2M27.2 46.2v4.2" fill="none" stroke="#e60e1a" stroke-width=".9"/><path d="M60.3 52v-5h8.7v5" fill="none" stroke="#e60e1a" stroke-width=".8"/><rect x="60.3" y="47" width="2.6" height="3.6" fill="#e60e1a"/><rect x="66.4" y="47" width="2.6" height="3.6" fill="#e60e1a"/><rect x="29" y="24.2" width="3.1" height="3.7" fill="#e60e1a"/><rect x="60.4" y="24.2" width="3.1" height="3.7" fill="#e60e1a"/><g transform="translate(21.8 30.6) rotate(33)"><rect x="-7.5" y="-2.2" width="15" height="4.4" rx="2.2" fill="none" stroke="#e60e1a" stroke-width=".9"/><path d="M-3.7 -2.200v4.400M0 -2.200v4.400M3.7 -2.200v4.4" stroke="#e60e1a" stroke-width=".8"/></g><rect x="13.3" y="40.3" width="1.4" height="1.4" fill="#e60e1a"/><rect x="15.8" y="31.8" width="1.4" height="1.4" fill="#e60e1a"/><rect x="18.8" y="33.8" width="1.4" height="1.4" fill="#e60e1a"/><rect x="21.8" y="35.8" width="1.4" height="1.4" fill="#e60e1a"/><rect x="27.8" y="37.8" width="1.4" height="1.4" fill="#e60e1a"/><rect x="9.8" y="25.8" width="1.4" height="1.4" fill="#e60e1a"/><path d="M6 30.500l3 -3 2 3M86.5 30.500l-3 -3 -2 3" fill="none" stroke="#e60e1a" stroke-width=".8"/><path d="M14 12.400h64M32 25.400h28M10 27.400h72M6 32.200h80M12 34.600h70" stroke="#0f7a2a" stroke-width=".8" stroke-dasharray="1.5 1.5" fill="none"/><path d="M29.5 38.600h53" stroke="#0b6a1e" stroke-width=".9" fill="none"/><path d="M31 4l-19 40M33 6l14 46M62 27l-18 25M85 34l-22 18M8 34l14 18M30 8l22 44" stroke="#0f7a2a" stroke-width=".7" stroke-dasharray="1.3 1.7" fill="none"/><path d="M35.7 -2.300h22M7.5 54.300h77.5" stroke="#27a9e0" stroke-width="1.1"/><path d="M-1.7 40.600v5" stroke="#27a9e0" stroke-width="1"/></g><g transform="translate(411.3 471.9) rotate(-90)"><path d="M0.5 19.2h9.7v12.2h-9.7z" fill="none" stroke="#e60e1a" stroke-width="1"/><path d="M0.5 19.2h9.7v12.2h-9.7z" fill="none" stroke="#e60e1a" stroke-width="1" transform="translate(92.5 0) scale(-1 1)"/><path d="M8.4 21.2l20.5 -20.5M10.2 23l20.6 -20.6" fill="none" stroke="#e60e1a" stroke-width="1"/><path d="M8.4 21.2l20.5 -20.5M10.2 23l20.6 -20.6" fill="none" stroke="#e60e1a" stroke-width="1" transform="translate(92.5 0) scale(-1 1)"/><path d="M28.9 0.4h6.8v4h-6.8z" fill="none" stroke="#e60e1a" stroke-width="1"/><path d="M28.9 0.4h6.8v4h-6.8z" fill="none" stroke="#e60e1a" stroke-width="1" transform="translate(92.5 0) scale(-1 1)"/><path d="M5.5 31.4v2.300h3v3h-4.500v3.500h-3.500v13.500h6.500M0.5 39h4v3.500h-4M0.5 45.500h4v5h-4" fill="none" stroke="#e60e1a" stroke-width="1"/><path d="M5.5 31.4v2.300h3v3h-4.500v3.500h-3.500v13.500h6.500M0.5 39h4v3.500h-4M0.5 45.500h4v5h-4" fill="none" stroke="#e60e1a" stroke-width="1" transform="translate(92.5 0) scale(-1 1)"/><path d="M35.7 1h21.100M35.7 2.300h21.1" stroke="#e60e1a" stroke-width=".8" fill="none"/><path d="M7 50.400h5.200M30.6 50.400v1.800h56M7 53.200h79" stroke="#e60e1a" stroke-width=".95" fill="none"/><path d="M12.2 50.4v-4.2h18.4v4.2h-18.4M15.2 46.2v4.2M18.2 46.2v4.2M22.5 46.2v4.2M23.5 46.2v4.2M27.2 46.2v4.2" fill="none" stroke="#e60e1a" stroke-width=".9"/><path d="M60.3 52v-5h8.7v5" fill="none" stroke="#e60e1a" stroke-width=".8"/><rect x="60.3" y="47" width="2.6" height="3.6" fill="#e60e1a"/><rect x="66.4" y="47" width="2.6" height="3.6" fill="#e60e1a"/><rect x="29" y="24.2" width="3.1" height="3.7" fill="#e60e1a"/><rect x="60.4" y="24.2" width="3.1" height="3.7" fill="#e60e1a"/><g transform="translate(21.8 30.6) rotate(33)"><rect x="-7.5" y="-2.2" width="15" height="4.4" rx="2.2" fill="none" stroke="#e60e1a" stroke-width=".9"/><path d="M-3.7 -2.200v4.400M0 -2.200v4.400M3.7 -2.200v4.4" stroke="#e60e1a" stroke-width=".8"/></g><rect x="13.3" y="40.3" width="1.4" height="1.4" fill="#e60e1a"/><rect x="15.8" y="31.8" width="1.4" height="1.4" fill="#e60e1a"/><rect x="18.8" y="33.8" width="1.4" height="1.4" fill="#e60e1a"/><rect x="21.8" y="35.8" width="1.4" height="1.4" fill="#e60e1a"/><rect x="27.8" y="37.8" width="1.4" height="1.4" fill="#e60e1a"/><rect x="9.8" y="25.8" width="1.4" height="1.4" fill="#e60e1a"/><path d="M6 30.500l3 -3 2 3M86.5 30.500l-3 -3 -2 3" fill="none" stroke="#e60e1a" stroke-width=".8"/><path d="M14 12.400h64M32 25.400h28M10 27.400h72M6 32.200h80M12 34.600h70" stroke="#0f7a2a" stroke-width=".8" stroke-dasharray="1.5 1.5" fill="none"/><path d="M29.5 38.600h53" stroke="#0b6a1e" stroke-width=".9" fill="none"/><path d="M31 4l-19 40M33 6l14 46M62 27l-18 25M85 34l-22 18M8 34l14 18M30 8l22 44" stroke="#0f7a2a" stroke-width=".7" stroke-dasharray="1.3 1.7" fill="none"/><path d="M35.7 -2.300h22M7.5 54.300h77.5" stroke="#27a9e0" stroke-width="1.1"/><path d="M-1.7 40.600v5" stroke="#27a9e0" stroke-width="1"/></g><path d="M248 195.3H462M248 209.3H462M248 223.3H462M248 237.3H462M248 251.3H462M248 265.3H462M248 291.9H462M248 305.9H462M248 319.9H462M248 333.9H462M248 347.9H462M248 361.9H462M248 387.4H462M248 401.4H462M248 415.4H462M248 429.4H462M248 443.4H462M248 457.4H462M255.9 176V470M273.9 176V470M285.9 176V470M311.8 176V470M329.8 176V470M341.8 176V470M367.6 176V470M385.6 176V470M397.6 176V470M423.3 176V470M441.3 176V470M453.3 176V470" stroke="#0f7a2a" stroke-width=".7" stroke-dasharray="1.5 1.7" fill="none" opacity=".6"/><path d="M315.3 176.7L351.5 122.0M360.7 250.4L254.6 252.1M254.0 273.7L246.0 183.7M336.8 408.6L246.6 347.7M380.3 450.1L398.8 427.3M454.9 141.0L462.0 122.0M276.9 165.4L246.0 235.0M284.7 324.5L318.0 296.4M363.2 146.5L257.5 122.0M391.6 271.7L347.0 290.5M343.0 227.8L413.6 271.6M298.2 322.0L304.3 404.6M402.1 223.8L462.0 139.7M335.5 384.7L252.0 382.3M254.4 354.2L317.9 370.3M433.4 232.6L462.0 253.4M370.1 281.5L451.7 379.3M347.5 352.8L246.0 397.1M384.5 465.6L461.7 418.2M328.6 354.3L246.0 345.9M282.0 165.2L246.0 224.2M273.7 209.9L247.5 291.6" stroke="#0f7a2a" stroke-width=".7" stroke-dasharray="1.5 1.7" fill="none" opacity=".7"/><path d="M239.6 108.400V115.5" stroke="#5e18a0" stroke-width="1"/><path d="M239.6 115.500V499.400H851" stroke="#1a7e28" stroke-width=".9" fill="none"/><path d="M857 499.400H1008.700V108.4" stroke="#5e18a0" stroke-width=".9" fill="none"/><path d="M240 115.700H854.700V499" stroke="#8e8ea8" stroke-width=".75" fill="none"/><path d="M241.7 476V117.300H852.900V476H241.7" stroke="#8e8ea8" stroke-width=".75" fill="none"/><circle cx="241.3" cy="475.6" r="2.3" fill="#8a22c8"/><path d="M359.2 496.300h5.600v5l3 5.500M359.2 496.300v5l-3 5.5" stroke="#5e18a0" stroke-width=".8" fill="none"/><path d="M606.1 496.300h5.600v5l3 5.500M606.1 496.300v5l-3 5.5" stroke="#5e18a0" stroke-width=".8" fill="none"/><path d="M851.5 496.300h5.600v5l3 5.500M851.5 496.300v5l-3 5.5" stroke="#5e18a0" stroke-width=".8" fill="none"/></svg>
<div class="b" style="left:489.4px;top:115.4px;width:243.9px;height:380.6px;background:#f0f0f0;border-radius:5.5px;overflow:hidden;box-shadow:0 0 0 .6px rgba(90,90,110,.55),0 6px 16px rgba(0,0,0,.35);"><div style="height:20.2px;background:#ebf5f8;"></div></div>
<span class="t" style="left:494.60px;top:120.73px;font-size:7.8px;line-height:10.14px;color:#0c0c0c;transform:perspective(1000px) translateZ(0) scaleX(1.0414);">Extractor</span>
<span class="t" style="left:681.83px;top:119.36px;font-size:9.6px;line-height:12.48px;color:#333;transform:perspective(1000px) translateZ(0) scaleX(1.0000);">?</span>
<svg class="b" style="left:712.00px;top:121.00px;transform:perspective(1000px) translateZ(0);" width="10" height="10" viewBox="0 0 10 10"><path d="M1.6 1.600l6.4 6.400M8 1.600l-6.4 6.4" stroke="#222" stroke-width=".85"/></svg>
<span class="t" style="left:495.70px;top:143.93px;font-size:7.8px;line-height:10.14px;color:#0c0c0c;transform:perspective(1000px) translateZ(0) scaleX(0.8574);">Type</span>
<div class="b" style="left:562.00px;top:141.00px;width:167.40px;height:16.00px;background:#fff;border:1px solid #d2d2d2;border-bottom-color:#8a8a8a;border-radius:2px;"></div>
<span class="t" style="left:566.30px;top:143.93px;font-size:7.8px;line-height:10.14px;color:#0c0c0c;transform:perspective(1000px) translateZ(0) scaleX(0.8508);">TRAP</span>
<svg class="b" style="left:720.00px;top:146.00px;transform:perspective(1000px) translateZ(0);" width="8" height="6" viewBox="0 0 8 6"><path d="M1.3 1.800l2.4 2.3 2.4-2.3" fill="none" stroke="#555" stroke-width=".8"/></svg>
<svg class="b" style="left:492.30px;top:159.50px;transform:perspective(1000px) translateZ(0);" width="237.7" height="21.0" viewBox="0 0 237.7 21.0"><rect x="1" y="1" width="235.7" height="19.0" fill="none" stroke="#dadada" stroke-width=".9"/></svg>
<svg class="b" style="left:496.60px;top:166.70px;transform:perspective(1000px) translateZ(0);" width="10" height="10" viewBox="0 0 10 10"><circle cx="5" cy="5" r="3.9" fill="#f7f7f7" stroke="#868686" stroke-width=".8"/></svg>
<span class="t" style="left:509.60px;top:167.43px;font-size:7.8px;line-height:10.14px;color:#0c0c0c;transform:perspective(1000px) translateZ(0) scaleX(0.9264);">Manual</span>
<svg class="b" style="left:573.10px;top:166.70px;transform:perspective(1000px) translateZ(0);" width="10" height="10" viewBox="0 0 10 10"><circle cx="5" cy="5" r="4.1" fill="#005fb8"/><circle cx="5" cy="5" r="1.9" fill="#fff"/></svg>
<span class="t" style="left:586.10px;top:167.43px;font-size:7.8px;line-height:10.14px;color:#0c0c0c;transform:perspective(1000px) translateZ(0) scaleX(0.9210);">Semi-Automatic</span>
<svg class="b" style="left:649.70px;top:166.70px;transform:perspective(1000px) translateZ(0);" width="10" height="10" viewBox="0 0 10 10"><circle cx="5" cy="5" r="3.9" fill="#f7f7f7" stroke="#868686" stroke-width=".8"/></svg>
<span class="t" style="left:662.70px;top:167.43px;font-size:7.8px;line-height:10.14px;color:#0c0c0c;transform:perspective(1000px) translateZ(0) scaleX(0.9284);">Automatic</span>
<svg class="b" style="left:492.30px;top:184.60px;transform:perspective(1000px) translateZ(0);" width="118.3" height="50.1" viewBox="0 0 118.3 50.1"><rect x="1" y="1" width="116.3" height="48.1" fill="none" stroke="#dadada" stroke-width=".9"/></svg>
<div class="b" style="left:496.80px;top:181.60px;width:29.20px;height:8.00px;background:#f0f0f0;"></div>
<span class="t" style="left:498.10px;top:180.83px;font-size:7.8px;line-height:10.14px;color:#0c0c0c;transform:perspective(1000px) translateZ(0) scaleX(0.9261);">Position</span>
<svg class="b" style="left:496.60px;top:192.10px;transform:perspective(1000px) translateZ(0);" width="10" height="10" viewBox="0 0 10 10"><circle cx="5" cy="5" r="4.1" fill="#005fb8"/><circle cx="5" cy="5" r="1.9" fill="#fff"/></svg>
<span class="t" style="left:509.60px;top:192.83px;font-size:7.8px;line-height:10.14px;color:#0c0c0c;transform:perspective(1000px) translateZ(0) scaleX(0.9748);">Middle</span>
<svg class="b" style="left:496.60px;top:205.30px;transform:perspective(1000px) translateZ(0);" width="10" height="10" viewBox="0 0 10 10"><circle cx="5" cy="5" r="3.9" fill="#f7f7f7" stroke="#868686" stroke-width=".8"/></svg>
<span class="t" style="left:509.60px;top:206.03px;font-size:7.8px;line-height:10.14px;color:#0c0c0c;transform:perspective(1000px) translateZ(0) scaleX(0.8430);">End</span>
<svg class="b" style="left:496.60px;top:218.70px;transform:perspective(1000px) translateZ(0);" width="10" height="10" viewBox="0 0 10 10"><circle cx="5" cy="5" r="3.9" fill="#f7f7f7" stroke="#868686" stroke-width=".8"/></svg>
<span class="t" style="left:509.60px;top:219.43px;font-size:7.8px;line-height:10.14px;color:#0c0c0c;transform:perspective(1000px) translateZ(0) scaleX(0.8880);">Picked Point</span>
<svg class="b" style="left:611.80px;top:184.60px;transform:perspective(1000px) translateZ(0);" width="118.2" height="70.8" viewBox="0 0 118.2 70.8"><rect x="1" y="1" width="116.2" height="68.8" fill="none" stroke="#dadada" stroke-width=".9"/></svg>
<div class="b" style="left:616.30px;top:181.60px;width:35.20px;height:8.00px;background:#f0f0f0;"></div>
<span class="t" style="left:617.60px;top:180.83px;font-size:7.8px;line-height:10.14px;color:#0c0c0c;transform:perspective(1000px) translateZ(0) scaleX(0.9140);">Extraction</span>
<svg class="b" style="left:615.80px;top:190.90px;transform:perspective(1000px) translateZ(0);" width="10" height="10" viewBox="0 0 10 10"><circle cx="5" cy="5" r="3.9" fill="#f7f7f7" stroke="#868686" stroke-width=".8"/></svg>
<span class="t" style="left:628.80px;top:191.63px;font-size:7.8px;line-height:10.14px;color:#0c0c0c;transform:perspective(1000px) translateZ(0) scaleX(0.9342);">Automatic</span>
<svg class="b" style="left:615.80px;top:203.40px;transform:perspective(1000px) translateZ(0);" width="10" height="10" viewBox="0 0 10 10"><circle cx="5" cy="5" r="4.1" fill="#005fb8"/><circle cx="5" cy="5" r="1.9" fill="#fff"/></svg>
<span class="t" style="left:628.80px;top:204.13px;font-size:7.8px;line-height:10.14px;color:#0c0c0c;transform:perspective(1000px) translateZ(0) scaleX(0.9087);">Part</span>
<svg class="b" style="left:615.80px;top:215.70px;transform:perspective(1000px) translateZ(0);" width="10" height="10" viewBox="0 0 10 10"><circle cx="5" cy="5" r="3.9" fill="#f7f7f7" stroke="#868686" stroke-width=".8"/></svg>
<span class="t" style="left:628.80px;top:216.43px;font-size:7.8px;line-height:10.14px;color:#0c0c0c;transform:perspective(1000px) translateZ(0) scaleX(0.9272);">Part holes and remnants</span>
<svg class="b" style="left:615.80px;top:227.90px;transform:perspective(1000px) translateZ(0);" width="10" height="10" viewBox="0 0 10 10"><circle cx="5" cy="5" r="3.9" fill="#f7f7f7" stroke="#868686" stroke-width=".8"/></svg>
<span class="t" style="left:628.80px;top:228.63px;font-size:7.8px;line-height:10.14px;color:#0c0c0c;transform:perspective(1000px) translateZ(0) scaleX(0.9212);">Remnant by selection</span>
<svg class="b" style="left:615.80px;top:239.90px;transform:perspective(1000px) translateZ(0);" width="10" height="10" viewBox="0 0 10 10"><circle cx="5" cy="5" r="3.9" fill="#f7f7f7" stroke="#868686" stroke-width=".8"/></svg>
<span class="t" style="left:628.80px;top:240.63px;font-size:7.8px;line-height:10.14px;color:#0c0c0c;transform:perspective(1000px) translateZ(0) scaleX(0.9025);">Islands, scrap...</span>
<svg class="b" style="left:493.30px;top:263.20px;transform:perspective(1000px) translateZ(0);" width="9" height="9" viewBox="0 0 9 9"><rect x=".2" y=".2" width="8.4" height="8.4" rx="1.7" fill="#005fb8"/><path d="M2.3 4.600l1.6 1.6 2.8-3.1" fill="none" stroke="#fff" stroke-width=".9"/></svg>
<span class="t" style="left:506.00px;top:262.83px;font-size:7.8px;line-height:10.14px;color:#0c0c0c;transform:perspective(1000px) translateZ(0) scaleX(0.9282);">Extract with retaining tabs</span>
<svg class="b" style="left:492.30px;top:296.50px;transform:perspective(1000px) translateZ(0);" width="118.3" height="50.0" viewBox="0 0 118.3 50.0"><rect x="1" y="1" width="116.3" height="48.0" fill="none" stroke="#dadada" stroke-width=".9"/></svg>
<div class="b" style="left:496.80px;top:293.50px;width:29.20px;height:8.00px;background:#f0f0f0;"></div>
<span class="t" style="left:498.10px;top:292.73px;font-size:7.8px;line-height:10.14px;color:#0c0c0c;transform:perspective(1000px) translateZ(0) scaleX(0.9261);">Position</span>
<svg class="b" style="left:496.60px;top:303.90px;transform:perspective(1000px) translateZ(0);" width="10" height="10" viewBox="0 0 10 10"><circle cx="5" cy="5" r="3.9" fill="#f7f7f7" stroke="#868686" stroke-width=".8"/></svg>
<span class="t" style="left:509.60px;top:304.63px;font-size:7.8px;line-height:10.14px;color:#0c0c0c;transform:perspective(1000px) translateZ(0) scaleX(0.9748);">Middle</span>
<svg class="b" style="left:496.60px;top:317.30px;transform:perspective(1000px) translateZ(0);" width="10" height="10" viewBox="0 0 10 10"><circle cx="5" cy="5" r="3.9" fill="#f7f7f7" stroke="#868686" stroke-width=".8"/></svg>
<span class="t" style="left:509.60px;top:318.03px;font-size:7.8px;line-height:10.14px;color:#0c0c0c;transform:perspective(1000px) translateZ(0) scaleX(0.8430);">End</span>
<svg class="b" style="left:496.60px;top:330.80px;transform:perspective(1000px) translateZ(0);" width="10" height="10" viewBox="0 0 10 10"><circle cx="5" cy="5" r="4.1" fill="#005fb8"/><circle cx="5" cy="5" r="1.9" fill="#fff"/></svg>
<span class="t" style="left:509.60px;top:331.53px;font-size:7.8px;line-height:10.14px;color:#0c0c0c;transform:perspective(1000px) translateZ(0) scaleX(0.8880);">Picked Point</span>
<svg class="b" style="left:492.30px;top:353.30px;transform:perspective(1000px) translateZ(0);" width="237.7" height="50.1" viewBox="0 0 237.7 50.1"><rect x="1" y="1" width="235.7" height="48.1" fill="none" stroke="#dadada" stroke-width=".9"/></svg>
<div class="b" style="left:496.80px;top:350.30px;width:31.80px;height:8.00px;background:#f0f0f0;"></div>
<span class="t" style="left:498.10px;top:349.53px;font-size:7.8px;line-height:10.14px;color:#0c0c0c;transform:perspective(1000px) translateZ(0) scaleX(0.9459);">Make on</span>
<svg class="b" style="left:496.60px;top:361.00px;transform:perspective(1000px) translateZ(0);" width="10" height="10" viewBox="0 0 10 10"><circle cx="5" cy="5" r="4.1" fill="#005fb8"/><circle cx="5" cy="5" r="1.9" fill="#fff"/></svg>
<span class="t" style="left:509.60px;top:361.73px;font-size:7.8px;line-height:10.14px;color:#0c0c0c;transform:perspective(1000px) translateZ(0) scaleX(0.9225);">The selected part</span>
<svg class="b" style="left:496.60px;top:374.20px;transform:perspective(1000px) translateZ(0);" width="10" height="10" viewBox="0 0 10 10"><circle cx="5" cy="5" r="3.9" fill="#f7f7f7" stroke="#868686" stroke-width=".8"/></svg>
<span class="t" style="left:509.60px;top:374.93px;font-size:7.8px;line-height:10.14px;color:#0c0c0c;transform:perspective(1000px) translateZ(0) scaleX(0.9300);">Identical parts with the same angle</span>
<svg class="b" style="left:496.60px;top:387.60px;transform:perspective(1000px) translateZ(0);" width="10" height="10" viewBox="0 0 10 10"><circle cx="5" cy="5" r="3.9" fill="#f7f7f7" stroke="#868686" stroke-width=".8"/></svg>
<span class="t" style="left:509.60px;top:388.33px;font-size:7.8px;line-height:10.14px;color:#0c0c0c;transform:perspective(1000px) translateZ(0) scaleX(0.9345);">All identical parts</span>
<svg class="b" style="left:493.30px;top:408.70px;transform:perspective(1000px) translateZ(0);" width="9" height="9" viewBox="0 0 9 9"><rect x=".2" y=".2" width="8.4" height="8.4" rx="1.7" fill="#005fb8"/><path d="M2.3 4.600l1.6 1.6 2.8-3.1" fill="none" stroke="#fff" stroke-width=".9"/></svg>
<span class="t" style="left:506.00px;top:408.33px;font-size:7.8px;line-height:10.14px;color:#0c0c0c;transform:perspective(1000px) translateZ(0) scaleX(0.9490);">Move the sheet to the trap</span>
<svg class="b" style="left:493.30px;top:423.80px;transform:perspective(1000px) translateZ(0);" width="9" height="9" viewBox="0 0 9 9"><rect x=".2" y=".2" width="8.4" height="8.4" rx="1.7" fill="#005fb8"/><path d="M2.3 4.600l1.6 1.6 2.8-3.1" fill="none" stroke="#fff" stroke-width=".9"/></svg>
<span class="t" style="left:506.00px;top:423.43px;font-size:7.8px;line-height:10.14px;color:#0c0c0c;transform:perspective(1000px) translateZ(0) scaleX(0.9145);">Lengthen Exterior Nibble Cycles</span>
<div class="b" style="left:588.40px;top:477.00px;width:68.50px;height:13.80px;background:#fdfdfd;border:1px solid #6fb0e6;border-radius:2px;"></div>
<span class="t" style="left:617.85px;top:479.53px;font-size:7.8px;line-height:10.14px;color:#0c0c0c;transform:perspective(1000px) translateZ(0) scaleX(0.8430);">OK</span>
<div class="b" style="left:660.30px;top:477.00px;width:68.10px;height:13.80px;background:#fdfdfd;border:1px solid #d6d6d6;border-bottom-color:#c0c0c0;border-radius:2px;"></div>
<span class="t" style="left:683.55px;top:479.53px;font-size:7.8px;line-height:10.14px;color:#0c0c0c;transform:perspective(1000px) translateZ(0) scaleX(0.8855);">Cancel</span>
<div class="b" style="left:224.00px;top:506.60px;width:842.00px;height:1.40px;background:#fbfbfb;"></div>
<div class="b" style="left:0.00px;top:508.00px;width:1066.00px;height:2.00px;background:#d6d6d3;"></div>
<div class="b" style="left:1064.80px;top:108.40px;width:1.20px;height:398.00px;background:#a3a3b8;"></div>
<div class="b" style="left:225.60px;top:108.00px;width:841.00px;height:1.00px;background:#858585;"></div>
<div class="b" style="left:555.20px;top:510.00px;width:3.20px;height:76.50px;background:#ececec;"></div>
<div class="b" style="left:556.00px;top:510.00px;width:1.00px;height:76.50px;background:#d2d2d2;"></div>
<span class="t" style="left:3.80px;top:513.00px;font-size:11.7px;line-height:15.21px;color:#3f6fb8;transform:perspective(1000px) translateZ(0) scaleX(0.8795);">Part Viewer</span>
<span class="t" style="left:562.30px;top:513.00px;font-size:11.7px;line-height:15.21px;color:#3f6fb8;transform:perspective(1000px) translateZ(0) scaleX(0.8621);">Part List</span>
<svg class="b" style="left:0.00px;top:0.00px;transform:perspective(1000px) translateZ(0);pointer-events:none;" width="1066" height="530" viewBox="0 0 1066 530"><path d="M521.3 518.7h5.400l-2.7 2.800z" fill="#333"/><path d="M533.8 516.8h2.400v4.400h-2.400zM532.8 521.2h4.400M535 521.2v2.6" stroke="#333" stroke-width=".9" fill="none"/><path d="M535.8 516.8v4.4" stroke="#333" stroke-width="1.1"/><path d="M544.2 517.5l5 5M549.2 517.5l-5 5" stroke="#333" stroke-width="1.1"/><path d="M1031.8999999999999 518.7h5.400l-2.7 2.800z" fill="#333"/><path d="M1044.5 516.8h2.400v4.400h-2.400zM1043.5 521.2h4.400M1045.7 521.2v2.6" stroke="#333" stroke-width=".9" fill="none"/><path d="M1046.5 516.8v4.4" stroke="#333" stroke-width="1.1"/><path d="M1055.5 517.5l5 5M1060.5 517.5l-5 5" stroke="#333" stroke-width="1.1"/></svg>
<div class="b" style="left:1.00px;top:529.00px;width:554.20px;height:56.80px;background:#fff;border:1px solid #c4c4c4;"></div>
<div class="b" style="left:543.50px;top:530.00px;width:10.70px;height:54.80px;background:#f0f0f0;"></div>
<div class="b" style="left:547.50px;top:542.00px;width:3.30px;height:24.00px;background:#767676;border-radius:1.5px;"></div>
<div class="b" style="left:2.50px;top:532.50px;width:48.35px;height:12.20px;background:#90ee90;"></div>
<div class="b" style="left:51.10px;top:532.50px;width:0.90px;height:49.00px;background:#bdbdbd;"></div>
<span class="t" style="left:3.70px;top:534.77px;font-size:8.2px;line-height:10.66px;color:#111;font-weight:bold;transform:perspective(1000px) translateZ(0) scaleX(0.9429);">0</span>
<span class="t" style="left:10.10px;top:534.77px;font-size:8.2px;line-height:10.66px;color:#111;font-weight:bold;transform:perspective(1000px) translateZ(0) scaleX(1.0000);">|</span>
<span class="t" style="left:15.70px;top:534.77px;font-size:8.2px;line-height:10.66px;color:#1f8a1f;font-weight:bold;transform:perspective(1000px) translateZ(0) scaleX(1.0306);">20</span>
<div class="b" style="left:51.95px;top:532.50px;width:48.35px;height:12.20px;background:#90ee90;"></div>
<div class="b" style="left:100.55px;top:532.50px;width:0.90px;height:49.00px;background:#bdbdbd;"></div>
<span class="t" style="left:53.15px;top:534.77px;font-size:8.2px;line-height:10.66px;color:#111;font-weight:bold;transform:perspective(1000px) translateZ(0) scaleX(0.9429);">0</span>
<span class="t" style="left:59.55px;top:534.77px;font-size:8.2px;line-height:10.66px;color:#111;font-weight:bold;transform:perspective(1000px) translateZ(0) scaleX(1.0000);">|</span>
<span class="t" style="left:65.15px;top:534.77px;font-size:8.2px;line-height:10.66px;color:#1f8a1f;font-weight:bold;transform:perspective(1000px) translateZ(0) scaleX(1.0306);">20</span>
<div class="b" style="left:101.40px;top:532.50px;width:48.35px;height:12.20px;background:#90ee90;"></div>
<div class="b" style="left:150.00px;top:532.50px;width:0.90px;height:49.00px;background:#bdbdbd;"></div>
<span class="t" style="left:102.60px;top:534.77px;font-size:8.2px;line-height:10.66px;color:#111;font-weight:bold;transform:perspective(1000px) translateZ(0) scaleX(0.9429);">0</span>
<span class="t" style="left:109.00px;top:534.77px;font-size:8.2px;line-height:10.66px;color:#111;font-weight:bold;transform:perspective(1000px) translateZ(0) scaleX(1.0000);">|</span>
<span class="t" style="left:114.60px;top:534.77px;font-size:8.2px;line-height:10.66px;color:#1f8a1f;font-weight:bold;transform:perspective(1000px) translateZ(0) scaleX(1.0306);">20</span>
<div class="b" style="left:150.85px;top:532.50px;width:48.35px;height:12.20px;background:#90ee90;"></div>
<div class="b" style="left:199.45px;top:532.50px;width:0.90px;height:49.00px;background:#bdbdbd;"></div>
<span class="t" style="left:152.05px;top:534.77px;font-size:8.2px;line-height:10.66px;color:#111;font-weight:bold;transform:perspective(1000px) translateZ(0) scaleX(0.9429);">0</span>
<span class="t" style="left:158.45px;top:534.77px;font-size:8.2px;line-height:10.66px;color:#111;font-weight:bold;transform:perspective(1000px) translateZ(0) scaleX(1.0000);">|</span>
<span class="t" style="left:164.05px;top:534.77px;font-size:8.2px;line-height:10.66px;color:#1f8a1f;font-weight:bold;transform:perspective(1000px) translateZ(0) scaleX(1.0306);">20</span>
<div class="b" style="left:200.30px;top:532.50px;width:48.35px;height:12.20px;background:#e2e2e2;"></div>
<div class="b" style="left:248.90px;top:532.50px;width:0.90px;height:49.00px;background:#bdbdbd;"></div>
<span class="t" style="left:201.50px;top:534.77px;font-size:8.2px;line-height:10.66px;color:#111;font-weight:bold;transform:perspective(1000px) translateZ(0) scaleX(1.0452);">655</span>
<span class="t" style="left:218.10px;top:534.77px;font-size:8.2px;line-height:10.66px;color:#111;font-weight:bold;transform:perspective(1000px) translateZ(0) scaleX(1.0000);">|</span>
<span class="t" style="left:223.50px;top:534.77px;font-size:8.2px;line-height:10.66px;color:#dc143c;font-weight:bold;transform:perspective(1000px) translateZ(0) scaleX(0.9867);">31</span>
<div class="b" style="left:249.75px;top:532.50px;width:48.35px;height:12.20px;background:#90ee90;"></div>
<div class="b" style="left:298.35px;top:532.50px;width:0.90px;height:49.00px;background:#bdbdbd;"></div>
<span class="t" style="left:250.95px;top:534.77px;font-size:8.2px;line-height:10.66px;color:#111;font-weight:bold;transform:perspective(1000px) translateZ(0) scaleX(0.9429);">0</span>
<span class="t" style="left:257.35px;top:534.77px;font-size:8.2px;line-height:10.66px;color:#111;font-weight:bold;transform:perspective(1000px) translateZ(0) scaleX(1.0000);">|</span>
<span class="t" style="left:262.95px;top:534.77px;font-size:8.2px;line-height:10.66px;color:#1f8a1f;font-weight:bold;transform:perspective(1000px) translateZ(0) scaleX(1.0306);">20</span>
<div class="b" style="left:299.20px;top:532.50px;width:48.35px;height:12.20px;background:#90ee90;"></div>
<div class="b" style="left:347.80px;top:532.50px;width:0.90px;height:49.00px;background:#bdbdbd;"></div>
<span class="t" style="left:300.40px;top:534.77px;font-size:8.2px;line-height:10.66px;color:#111;font-weight:bold;transform:perspective(1000px) translateZ(0) scaleX(0.9429);">0</span>
<span class="t" style="left:306.80px;top:534.77px;font-size:8.2px;line-height:10.66px;color:#111;font-weight:bold;transform:perspective(1000px) translateZ(0) scaleX(1.0000);">|</span>
<span class="t" style="left:312.40px;top:534.77px;font-size:8.2px;line-height:10.66px;color:#1f8a1f;font-weight:bold;transform:perspective(1000px) translateZ(0) scaleX(1.0306);">20</span>
<svg class="b" style="left:0.00px;top:0.00px;transform:perspective(1000px) translateZ(0);pointer-events:none;" width="556" height="586" viewBox="0 0 556 586"><path d="M38.7 538.5l1.8 -1.5 2 2.800q2.5 -4.8 6.2 -7.300l.9 .9q-3.6 3.6 -6.2 10.100h-1.500q-1.3 -2.7 -3.2 -5z" fill="#4cc24c"/><path d="M88.15 538.5l1.8 -1.5 2 2.800q2.5 -4.8 6.2 -7.300l.9 .9q-3.6 3.6 -6.2 10.100h-1.500q-1.3 -2.7 -3.2 -5z" fill="#4cc24c"/><path d="M137.60000000000002 538.5l1.8 -1.5 2 2.800q2.5 -4.8 6.2 -7.300l.9 .9q-3.6 3.6 -6.2 10.100h-1.500q-1.3 -2.7 -3.2 -5z" fill="#4cc24c"/><path d="M187.05 538.5l1.8 -1.5 2 2.800q2.5 -4.8 6.2 -7.300l.9 .9q-3.6 3.6 -6.2 10.100h-1.500q-1.3 -2.7 -3.2 -5z" fill="#4cc24c"/><path d="M285.95 538.5l1.8 -1.5 2 2.800q2.5 -4.8 6.2 -7.300l.9 .9q-3.6 3.6 -6.2 10.100h-1.500q-1.3 -2.7 -3.2 -5z" fill="#4cc24c"/><path d="M335.40000000000003 538.5l1.8 -1.5 2 2.800q2.5 -4.8 6.2 -7.300l.9 .9q-3.6 3.6 -6.2 10.100h-1.500q-1.3 -2.7 -3.2 -5z" fill="#4cc24c"/><rect x="6.7" y="550.5" width="40" height="26" rx="3" fill="none" stroke="#111" stroke-width=".9"/><rect x="18" y="555.5" width="17.5" height="5" fill="none" stroke="#111" stroke-width=".8"/><rect x="18" y="566.5" width="17.5" height="5.5" fill="none" stroke="#111" stroke-width=".8"/><path d="M6.7 554v19M46.7 554v19" stroke="#fff" stroke-width="1.2" stroke-dasharray="1.5 1.5"/><path d="M12 550.500h30M12 576.500h30" stroke="#111" stroke-width="1.3" stroke-dasharray="2 6"/><path d="M58.5 560.500h35l1.5 1v3.500l-1.5 1h-35l-1.5 -1v-3.500z" fill="none" stroke="#111" stroke-width=".8"/><rect x="60.3" y="562" width="16.5" height="2.5" fill="none" stroke="#111" stroke-width=".7"/><path d="M85.5 562v2.600M87.5 562v2.600M89.5 562v2.600M91.5 562v2.6" stroke="#111" stroke-width=".8"/><path d="M107.5 551.500h35.500l3 2.500v21l-2 2h-37.500l-1.5 -1.500v-21z" fill="none" stroke="#111" stroke-width=".9"/><rect x="107" y="553.5" width="6.5" height="3" rx="1" fill="none" stroke="#111" stroke-width=".7"/><rect x="107.5" y="570.5" width="6" height="3" fill="none" stroke="#111" stroke-width=".7"/><path d="M138.5 552v6.500M117.5 568.500h3.500M140.5 568.500h4" stroke="#111" stroke-width="1.1"/><circle cx="114.5" cy="564.5" r=".7" fill="#111"/><circle cx="106.5" cy="565" r=".7" fill="#111"/><path d="M164.5 548h22.500v6h4.500v21h-4.500v4.500h-22.500v-4.500h-4.500v-21h4.500z" fill="none" stroke="#111" stroke-width=".9"/><path d="M162 556v18M189.5 556v18" stroke="#111" stroke-width="1" stroke-dasharray=".9 2.6"/><path d="M166 563.500h22" stroke="#111" stroke-width=".6" stroke-dasharray=".8 3.5"/><circle cx="168" cy="556" r=".5" fill="#111"/><circle cx="168" cy="571" r=".5" fill="#111"/><path d="M205 573.500c-2 -2 -.5 -4 1.5 -4.5 1 -3.5 3.5 -7.5 7 -10.500l4.5 -5.500h13l9 7.500c1.5 3 2.5 5.5 2.5 8l2 3.500c-.5 2 -2.5 2.8 -4.5 1.800h-26c-1.5 2 -7 2.2 -9 -.3z" fill="none" stroke="#111" stroke-width=".9"/><circle cx="217.5" cy="563.5" r=".9" fill="#111"/><circle cx="232" cy="563.5" r=".9" fill="#111"/><path d="M211.5 565l4 3.5" stroke="#111" stroke-width="1.6" stroke-dasharray=".6 .6"/><rect x="254.3" y="555.5" width="40" height="16" rx=".8" fill="none" stroke="#111" stroke-width=".9"/><path d="M254.8 568.500h7" stroke="#111" stroke-width="1.2"/><circle cx="260.5" cy="562.5" r=".6" fill="#111"/><circle cx="263.5" cy="560" r=".6" fill="#111"/><circle cx="266" cy="562.5" r=".6" fill="#111"/><circle cx="285" cy="560" r=".6" fill="#111"/><circle cx="287.5" cy="562.5" r=".6" fill="#111"/><circle cx="290.5" cy="560" r=".6" fill="#111"/><circle cx="292.5" cy="562.5" r=".6" fill="#111"/><path d="M315 548h22.500v16l-9.5 15h-18.500v-19h2.500v-1.500h-2.500l2 -.5z" fill="none" stroke="#111" stroke-width=".9"/><circle cx="320.5" cy="551.5" r=".95" fill="#111"/><circle cx="329" cy="553.5" r=".95" fill="#111"/><circle cx="335" cy="556.5" r=".95" fill="#111"/><circle cx="329" cy="559" r=".95" fill="#111"/><circle cx="320.5" cy="560" r=".95" fill="#111"/><circle cx="317.5" cy="566.5" r=".95" fill="#111"/><circle cx="323" cy="566.5" r=".95" fill="#111"/><circle cx="317.5" cy="575" r=".95" fill="#111"/><circle cx="323" cy="575" r=".95" fill="#111"/></svg>
<div class="b" style="left:558.40px;top:529.00px;width:507.60px;height:56.80px;background:#fff;border:1px solid #c4c4c4;border-right:none;overflow:hidden;"></div>
<span class="t" style="left:562.70px;top:532.93px;font-size:7.8px;line-height:10.14px;color:#0c0c0c;transform:perspective(1000px) translateZ(0) scaleX(0.8975);">Reference</span>
<span class="t" style="left:652.30px;top:532.93px;font-size:7.8px;line-height:10.14px;color:#0c0c0c;transform:perspective(1000px) translateZ(0) scaleX(0.9350);">Labor ticket</span>
<span class="t" style="left:696.70px;top:532.93px;font-size:7.8px;line-height:10.14px;color:#0c0c0c;transform:perspective(1000px) translateZ(0) scaleX(0.9084);">Pending qua...</span>
<span class="t" style="left:749.40px;top:532.93px;font-size:7.8px;line-height:10.14px;color:#0c0c0c;transform:perspective(1000px) translateZ(0) scaleX(0.9139);">Nested qua...</span>
<span class="t" style="left:801.80px;top:532.93px;font-size:7.8px;line-height:10.14px;color:#0c0c0c;transform:perspective(1000px) translateZ(0) scaleX(0.9031);">Dimensions</span>
<div class="b" style="left:648.30px;top:530.60px;width:0.90px;height:13.00px;background:#e4e4e4;"></div>
<div class="b" style="left:693.30px;top:530.60px;width:0.90px;height:13.00px;background:#e4e4e4;"></div>
<div class="b" style="left:745.00px;top:530.60px;width:0.90px;height:13.00px;background:#e4e4e4;"></div>
<div class="b" style="left:797.50px;top:530.60px;width:0.90px;height:13.00px;background:#e4e4e4;"></div>
<div class="b" style="left:881.00px;top:530.60px;width:0.90px;height:13.00px;background:#e4e4e4;"></div>
<span class="t" style="left:574.00px;top:545.73px;font-size:7.8px;line-height:10.14px;color:#0c0c0c;transform:perspective(1000px) translateZ(0) scaleX(0.8397);">DXFPUNC2</span>
<span class="t" style="left:652.70px;top:545.73px;font-size:7.8px;line-height:10.14px;color:#0c0c0c;transform:perspective(1000px) translateZ(0) scaleX(1.0000);">5</span>
<span class="t" style="left:697.30px;top:545.73px;font-size:7.8px;line-height:10.14px;color:#0c0c0c;transform:perspective(1000px) translateZ(0) scaleX(1.0000);">0</span>
<span class="t" style="left:749.40px;top:545.73px;font-size:7.8px;line-height:10.14px;color:#0c0c0c;transform:perspective(1000px) translateZ(0) scaleX(0.8760);">20</span>
<span class="t" style="left:801.80px;top:545.73px;font-size:7.8px;line-height:10.14px;color:#0c0c0c;transform:perspective(1000px) translateZ(0) scaleX(0.8902);">300 x 200</span>
<span class="t" style="left:574.00px;top:557.33px;font-size:7.8px;line-height:10.14px;color:#0c0c0c;transform:perspective(1000px) translateZ(0) scaleX(0.8397);">DXFPUNC3</span>
<span class="t" style="left:652.70px;top:557.33px;font-size:7.8px;line-height:10.14px;color:#0c0c0c;transform:perspective(1000px) translateZ(0) scaleX(1.0000);">6</span>
<span class="t" style="left:697.30px;top:557.33px;font-size:7.8px;line-height:10.14px;color:#0c0c0c;transform:perspective(1000px) translateZ(0) scaleX(1.0000);">0</span>
<span class="t" style="left:749.40px;top:557.33px;font-size:7.8px;line-height:10.14px;color:#0c0c0c;transform:perspective(1000px) translateZ(0) scaleX(0.8760);">20</span>
<span class="t" style="left:801.80px;top:557.33px;font-size:7.8px;line-height:10.14px;color:#0c0c0c;transform:perspective(1000px) translateZ(0) scaleX(0.8902);">750 x 100</span>
<span class="t" style="left:574.00px;top:568.93px;font-size:7.8px;line-height:10.14px;color:#0c0c0c;transform:perspective(1000px) translateZ(0) scaleX(0.8397);">DXFPUNC4</span>
<span class="t" style="left:652.70px;top:568.93px;font-size:7.8px;line-height:10.14px;color:#0c0c0c;transform:perspective(1000px) translateZ(0) scaleX(1.0000);">7</span>
<span class="t" style="left:697.30px;top:568.93px;font-size:7.8px;line-height:10.14px;color:#0c0c0c;transform:perspective(1000px) translateZ(0) scaleX(1.0000);">0</span>
<span class="t" style="left:749.40px;top:568.93px;font-size:7.8px;line-height:10.14px;color:#0c0c0c;transform:perspective(1000px) translateZ(0) scaleX(0.8760);">20</span>
<span class="t" style="left:801.80px;top:568.93px;font-size:7.8px;line-height:10.14px;color:#0c0c0c;transform:perspective(1000px) translateZ(0) scaleX(0.8902);">396 x 255</span>
<div class="b" style="left:559px;top:579.5px;width:495px;height:5.3px;overflow:hidden;">
<span class="t" style="left:15.00px;top:1.03px;font-size:7.8px;line-height:10.14px;color:#0c0c0c;transform:perspective(1000px) translateZ(0) scaleX(0.8397);">DXFPUNC1</span>
<span class="t" style="left:93.70px;top:1.03px;font-size:7.8px;line-height:10.14px;color:#0c0c0c;transform:perspective(1000px) translateZ(0) scaleX(1.0000);">8</span>
<span class="t" style="left:138.30px;top:1.03px;font-size:7.8px;line-height:10.14px;color:#0c0c0c;transform:perspective(1000px) translateZ(0) scaleX(1.0000);">0</span>
<span class="t" style="left:190.40px;top:1.03px;font-size:7.8px;line-height:10.14px;color:#0c0c0c;transform:perspective(1000px) translateZ(0) scaleX(0.8760);">20</span>
<span class="t" style="left:242.80px;top:1.03px;font-size:7.8px;line-height:10.14px;color:#0c0c0c;transform:perspective(1000px) translateZ(0) scaleX(0.8673);">850.4 x 810.4</span>
<svg class="b" style="left:0;top:0" width="20" height="6"><path d="M4 6.599999999999909l2.3 2.3 5.8 -5.3" fill="none" stroke="#222" stroke-width="1"/></svg>
</div>
<svg class="b" style="left:0.00px;top:0.00px;transform:perspective(1000px) translateZ(0);pointer-events:none;" width="1066" height="586" viewBox="0 0 1066 586"><path d="M563 551.3l2.3 2.3 5.8 -5.3" fill="none" stroke="#1a1a1a" stroke-width="1.1"/><path d="M563 562.9l2.3 2.3 5.8 -5.3" fill="none" stroke="#1a1a1a" stroke-width="1.1"/><path d="M563 574.5l2.3 2.3 5.8 -5.3" fill="none" stroke="#1a1a1a" stroke-width="1.1"/></svg>
<div class="b" style="left:1055.00px;top:530.60px;width:11.00px;height:54.20px;background:#f0f0f0;"></div>
<div class="b" style="left:1058.00px;top:541.70px;width:3.40px;height:13.30px;background:#767676;border-radius:1.5px;"></div>
<div class="b" style="left:0.00px;top:586.30px;width:1066.00px;height:13.70px;background:#f0f0f0;border-top:1px solid #dadada;"></div>
<div class="b" style="left:0.00px;top:599.00px;width:1066.00px;height:1.00px;background:#6f8fc4;"></div>
<span class="t" style="left:15.00px;top:587.56px;font-size:9.3px;line-height:12.09px;color:#484848;transform:perspective(1000px) translateZ(0) scaleX(0.8798);">Component Removal - Part Extraction</span>
<span class="t" style="left:163.50px;top:587.56px;font-size:9.3px;line-height:12.09px;color:#484848;transform:perspective(1000px) translateZ(0) scaleX(1.0000);">1</span>
<span class="t" style="left:171.30px;top:587.56px;font-size:9.3px;line-height:12.09px;color:#484848;transform:perspective(1000px) translateZ(0) scaleX(0.8634);">2000.000x1250.000</span>
<span class="t" style="left:251.00px;top:587.56px;font-size:9.3px;line-height:12.09px;color:#484848;transform:perspective(1000px) translateZ(0) scaleX(0.8020);">Use : 19.0 %</span>
<span class="t" style="left:303.50px;top:587.56px;font-size:9.3px;line-height:12.09px;color:#484848;transform:perspective(1000px) translateZ(0) scaleX(0.8329);">Remnant : 57.2 %</span>
<span class="t" style="left:375.00px;top:587.56px;font-size:9.3px;line-height:12.09px;color:#484848;transform:perspective(1000px) translateZ(0) scaleX(0.8344);">733.000x1245.000</span>
<span class="t" style="left:449.30px;top:587.56px;font-size:9.3px;line-height:12.09px;color:#484848;transform:perspective(1000px) translateZ(0) scaleX(0.7187);">0F</span>
<span class="t" style="left:466.70px;top:587.56px;font-size:9.3px;line-height:12.09px;color:#484848;transform:perspective(1000px) translateZ(0) scaleX(0.8151);">CNC: 0368</span>
<span class="t" style="left:714.00px;top:587.56px;font-size:9.3px;line-height:12.09px;color:#484848;transform:perspective(1000px) translateZ(0) scaleX(0.8601);">Tool: RE-100x5-0</span>
<span class="t" style="left:898.00px;top:587.56px;font-size:9.3px;line-height:12.09px;color:#484848;transform:perspective(1000px) translateZ(0) scaleX(0.8273);">X: 1014.558</span>
<span class="t" style="left:969.50px;top:587.56px;font-size:9.3px;line-height:12.09px;color:#484848;transform:perspective(1000px) translateZ(0) scaleX(0.8364);">Y: 1258.33</span>
<span class="t" style="left:1045.00px;top:587.56px;font-size:9.3px;line-height:12.09px;color:#484848;transform:perspective(1000px) translateZ(0) scaleX(0.9358);">mm</span>
<svg class="b" style="left:3.00px;top:588.50px;transform:perspective(1000px) translateZ(0);" width="11" height="10" viewBox="0 0 11 10"><path d="M1 2.500l4.5 -1.8 4 2 -4.5 2z" fill="#1b9de2" stroke="#444" stroke-width=".5"/><path d="M5 4.800v2.500l-2 2.500h4.500l-2 -2.5" fill="none" stroke="#444" stroke-width=".8"/><path d="M1.5 3.500v3l2.5 1" fill="none" stroke="#444" stroke-width=".7"/></svg>
</body></html>
